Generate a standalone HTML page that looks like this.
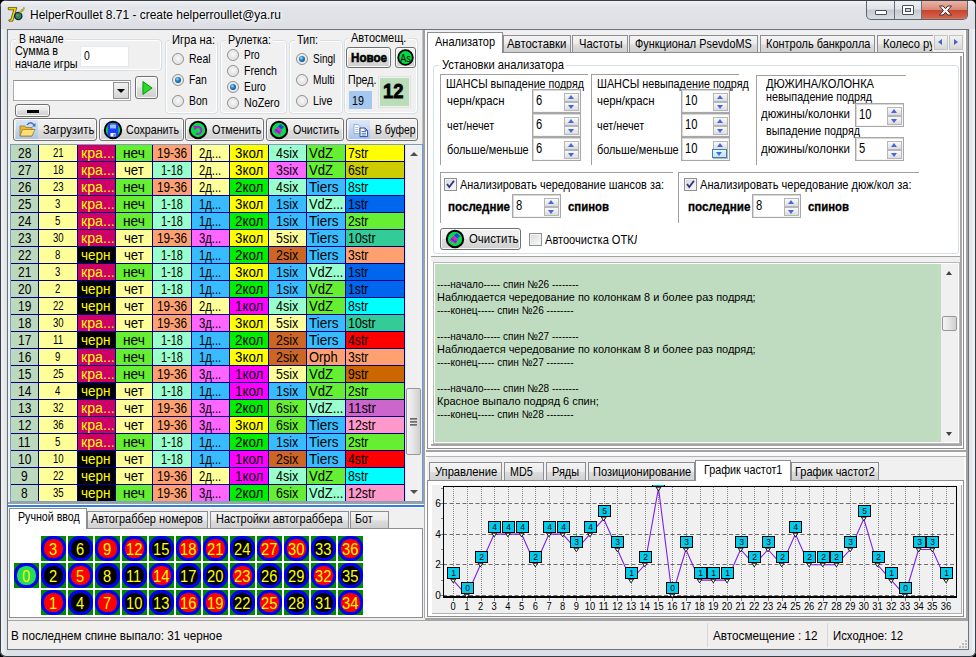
<!DOCTYPE html>
<html lang="ru"><head><meta charset="utf-8"><title>HelperRoullet 8.71</title>
<style>
html,body{margin:0;padding:0;background:#000;}
body{width:976px;height:657px;overflow:hidden;position:relative;font-family:"Liberation Sans",sans-serif;}
div,span.t,svg{position:absolute;box-sizing:border-box;}
.t{white-space:nowrap;transform-origin:0 0;color:#000;font-family:"Liberation Sans",sans-serif;}
#frame{left:0;top:0;width:976px;height:657px;border-radius:7px 7px 6px 6px;background:linear-gradient(90deg,#f4f6f9 0,#dde0e6 7px,#dde0e6 969px,#f4f6f9 976px);box-shadow:inset 0 0 0 1px #3a3f46;overflow:hidden;}
#tbar{left:1px;top:1px;width:974px;height:28px;background:linear-gradient(180deg,#f1f2f4 0,#e1e4e9 20%,#dddfe4 100%);}
#client{left:7px;top:29px;width:962px;height:621px;background:#f0f0f0;border:1px solid #6d737b;}
.btn{border:1px solid #707070;border-radius:3px;background:linear-gradient(180deg,#f2f2f2 0,#ebebeb 48%,#dddddd 52%,#cfcfcf 100%);box-shadow:inset 0 0 0 1px rgba(255,255,255,.85);}
.gb{border:1px solid #d5dfe5;border-radius:4px;box-shadow:inset 0 0 0 1px #fff;}
.gbw{border:1px solid #d5dfe5;border-radius:3px;}
.rad{width:12px;height:12px;border-radius:50%;border:1px solid #8e8f8f;background:radial-gradient(circle at 50% 45%,#fafafa 0,#e4e4e4 55%,#c9c9c9 100%);box-shadow:inset 0 0 0 1px #f0f0f0;}
.rad.on::after{content:"";position:absolute;left:2px;top:2px;width:6px;height:6px;border-radius:50%;background:radial-gradient(circle at 40% 35%,#a8dcf8 0,#1f7fc4 40%,#083a70 100%);}
.edit{background:#fff;border:1px solid #abadb3;border-top-color:#8f9196;}
.spin{background:#fff;border:1px solid #a7a7a7;box-shadow:inset 1px 1px 0 #d9d9d9,inset -1px -1px 0 #f4f4f4;}
.sb{left:31px;width:15px;height:9px;border:1px solid #b4b6ba;background:linear-gradient(180deg,#fafafa,#dcdcdc);}
.sb::after{content:"";position:absolute;left:3px;width:0;height:0;border-left:3.500px solid transparent;border-right:3.500px solid transparent;}
.sb.u{top:3px;}.sb.d{top:12px;}
.sb.u::after{border-bottom:4px solid #4668d8;top:1px;}
.sb.d::after{border-top:4px solid #4668d8;top:2px;}
.chk{width:13px;height:13px;border:1px solid #8e8f8f;background:linear-gradient(135deg,#d8d8d8,#fbfbfb);box-shadow:inset 0 0 0 1px #f2f2f2;}
.tab{border:1px solid #8c8e94;border-bottom:0;background:linear-gradient(180deg,#f4f4f4 0,#ebebeb 50%,#dcdcdc 55%,#d0d0d0 100%);}
.tab.a{background:#fff;z-index:2;}
.page{background:#fff;border:1px solid #8c8e94;}
.pl{border-top:1px solid #a0a0a0;border-left:1px solid #a0a0a0;}
.cell{overflow:hidden;}
.c{position:absolute;white-space:nowrap;font-size:14px;line-height:16px;height:16px;top:0;color:#000;transform-origin:0 0;transform:scaleX(.84);font-family:"Liberation Sans",sans-serif;}
</style></head><body>
<div id="frame">
<div id="tbar"></div>
<svg style="left:7px;top:6px" width="18" height="18" viewBox="0 0 18 18">
<path d="M1.200 1.600h8.600l-4 13.600H2l-.3-1.200 2.300-.8 2.700-9.400H1.400z" fill="#f0e000" stroke="#5a4a00" stroke-width=".800"/>
<circle cx="11.300" cy="10" r="3.600" fill="#2f8f3f" stroke="#141c5c" stroke-width="1.300"/>
<path d="M9.500 8.500l2 1.500" stroke="#8a8a8a" stroke-width="1.200"/>
<path d="M12.500 6.500l2-3 .8.800 1.500-3 .8.800-1.800 3.200-.8-.6-1.600 2.600z" fill="#f6ee00" stroke="#6b5a00" stroke-width=".500"/>
</svg>
<span class="t" style="left:29.5px;top:8.34px;font-size:12px;line-height:14px;transform:scaleX(0.997);color:#000;text-shadow:0 0 5px #fff,0 0 8px #fff,0 0 3px #fff;">HelperRoullet 8.71 - create helperroullet@ya.ru</span>
<div style="left:866px;top:1px;width:102px;height:19px;border:1px solid #5f656d;border-top:0;border-radius:0 0 5px 5px;overflow:hidden;background:linear-gradient(180deg,#eef1f4 0,#dfe3e8 45%,#c4cad2 50%,#d8dde3 100%);">
<div style="left:27px;top:0;width:1px;height:19px;background:#6a7078"></div>
<div style="left:54px;top:0;width:1px;height:19px;background:#6a7078"></div>
<div style="left:55px;top:0;width:46px;height:19px;background:linear-gradient(180deg,#e8b4a8 0,#d98a78 45%,#c8452c 50%,#d2604a 85%,#dd8a70 100%);"></div>
<div style="left:8px;top:9px;width:12px;height:5px;border:1px solid #4a5058;background:#fff;border-radius:1px"></div>
<div style="left:35px;top:4px;width:12px;height:10px;border:1px solid #4a5058;background:#fff;border-radius:1px"></div>
<div style="left:38px;top:7px;width:6px;height:4px;border:1px solid #4a5058;background:#cdd2d8"></div>
<svg style="left:72px;top:4px" width="13" height="11" viewBox="0 0 13 11"><path d="M.500 1h3.700l2.300 2.700L8.800 1h3.700L8.600 5.500l3.900 4.500H8.800L6.500 7.300 4.200 10H.500l3.900-4.500z" fill="#fff" stroke="#4a2a32" stroke-width="1"/></svg>
</div>
<div id="client"></div>
<div class="gb" style="left:10px;top:39px;width:152px;height:32px;"></div>
<div style="left:16px;top:33px;width:49px;height:12px;background:#f0f0f0"></div>
<span class="t" style="left:18.5px;top:30.80px;font-size:13px;line-height:15px;transform:scaleX(0.806);">В начале</span>
<span class="t" style="left:14.5px;top:42.80px;font-size:13px;line-height:15px;transform:scaleX(0.837);">Сумма в</span>
<span class="t" style="left:14.5px;top:55.80px;font-size:13px;line-height:15px;transform:scaleX(0.832);">начале игры</span>
<div class="" style="left:80px;top:46px;width:49px;height:21px;background:#fff;border:1px solid #e3e9ef;"></div>
<span class="t" style="left:83.5px;top:48.00px;font-size:13px;line-height:15px;transform:scaleX(0.802);">0</span>
<div class="edit" style="left:13px;top:80px;width:118px;height:21px;"></div>
<div class="" style="left:113px;top:82px;width:16px;height:17px;border:1px solid #8f8f8f;background:linear-gradient(180deg,#f2f2f2,#d4d4d4);"></div>
<div style="left:117px;top:89px;border:4px solid transparent;border-top:4px solid #000;border-bottom:0;width:0;height:0"></div>
<div class="btn" style="left:135px;top:76px;width:23px;height:23px;"></div>
<svg style="left:142px;top:80px" width="11" height="16" viewBox="0 0 12 16"><path d="M1 1l10 7L1 15z" fill="#22dd22" stroke="#0a8a0a" stroke-width="1"/></svg>
<div class="btn" style="left:15px;top:104px;width:35px;height:13px;"></div>
<div class="" style="left:27px;top:110px;width:12px;height:3px;background:#000"></div>
<div class="gb" style="left:165px;top:40px;width:53px;height:74px;"></div>
<div style="left:170px;top:34px;width:47px;height:12px;background:#f0f0f0"></div>
<span class="t" style="left:172px;top:32.00px;font-size:13px;line-height:15px;transform:scaleX(0.857);">Игра на:</span>
<div class="gb" style="left:220px;top:40px;width:67px;height:74px;"></div>
<div style="left:226px;top:34px;width:47px;height:12px;background:#f0f0f0"></div>
<span class="t" style="left:228px;top:32.00px;font-size:13px;line-height:15px;transform:scaleX(0.826);">Рулетка:</span>
<div class="gb" style="left:289px;top:40px;width:54px;height:74px;"></div>
<div style="left:295px;top:34px;width:25px;height:12px;background:#f0f0f0"></div>
<span class="t" style="left:297px;top:32.00px;font-size:13px;line-height:15px;transform:scaleX(0.831);">Тип:</span>
<div class="gb" style="left:344px;top:38px;width:74px;height:76px;"></div>
<div style="left:349px;top:32px;width:59.4px;height:12px;background:#f0f0f0"></div>
<span class="t" style="left:351px;top:30.00px;font-size:13px;line-height:15px;transform:scaleX(0.848);">Автосмещ.</span>
<div class="rad" style="left:171.7px;top:52.7px;width:12px;height:12px;"></div>
<span class="t" style="left:188.7px;top:50.70px;font-size:13px;line-height:15px;transform:scaleX(0.807);">Real</span>
<div class="rad on" style="left:171.7px;top:73.7px;width:12px;height:12px;"></div>
<span class="t" style="left:188.7px;top:71.70px;font-size:13px;line-height:15px;transform:scaleX(0.799);">Fan</span>
<div class="rad" style="left:171.7px;top:94.7px;width:12px;height:12px;"></div>
<span class="t" style="left:188.7px;top:92.70px;font-size:13px;line-height:15px;transform:scaleX(0.799);">Bon</span>
<div class="rad" style="left:226.6px;top:48.8px;width:12px;height:12px;"></div>
<span class="t" style="left:243.6px;top:46.80px;font-size:13px;line-height:15px;transform:scaleX(0.776);">Pro</span>
<div class="rad" style="left:226.6px;top:64.7px;width:12px;height:12px;"></div>
<span class="t" style="left:243.6px;top:62.70px;font-size:13px;line-height:15px;transform:scaleX(0.813);">French</span>
<div class="rad on" style="left:226.6px;top:80.8px;width:12px;height:12px;"></div>
<span class="t" style="left:243.6px;top:78.80px;font-size:13px;line-height:15px;transform:scaleX(0.797);">Euro</span>
<div class="rad" style="left:226.6px;top:96.7px;width:12px;height:12px;"></div>
<span class="t" style="left:243.6px;top:94.70px;font-size:13px;line-height:15px;transform:scaleX(0.821);">NoZero</span>
<div class="rad on" style="left:295.6px;top:53px;width:12px;height:12px;"></div>
<span class="t" style="left:312.6px;top:51.00px;font-size:13px;line-height:15px;transform:scaleX(0.771);">Singl</span>
<div class="rad" style="left:295.6px;top:74px;width:12px;height:12px;"></div>
<span class="t" style="left:312.6px;top:72.00px;font-size:13px;line-height:15px;transform:scaleX(0.783);">Multi</span>
<div class="rad" style="left:295.6px;top:95px;width:12px;height:12px;"></div>
<span class="t" style="left:312.6px;top:93.00px;font-size:13px;line-height:15px;transform:scaleX(0.817);">Live</span>
<div class="btn" style="left:346px;top:47px;width:45px;height:21px;"></div>
<span class="t" style="left:350.7px;top:50.00px;font-size:13px;line-height:15px;transform:scaleX(0.893);font-weight:bold;-webkit-text-stroke:.6px #000;">Новое</span>
<div class="btn" style="left:395px;top:47px;width:21px;height:21px;"></div>
<svg style="left:397px;top:49px" width="17" height="17" viewBox="0 0 17 17"><circle cx="8.5" cy="8.5" r="7.3" fill="#00dd44" stroke="#000" stroke-width="1.8"/><text x="8.5" y="12.6" font-family="Liberation Sans,sans-serif" font-size="11" text-anchor="middle" fill="#000" textLength="10.500" lengthAdjust="spacingAndGlyphs">As</text></svg>
<span class="t" style="left:348px;top:72.00px;font-size:13px;line-height:15px;transform:scaleX(0.82);">Пред.</span>
<div class="" style="left:349px;top:91px;width:23px;height:18px;background:#a4c8f0"></div>
<span class="t" style="left:352px;top:93.00px;font-size:13px;line-height:15px;transform:scaleX(0.82);">19</span>
<div class="" style="left:378px;top:76px;width:33px;height:32px;border:1px solid #e2e2e2;background:#f0f0f0"></div>
<div class="" style="left:380px;top:78px;width:29px;height:28px;background:#b9dcb9"></div>
<span class="t" style="left:382.7px;top:80.37px;font-size:20px;line-height:22px;transform:scaleX(0.921);font-weight:bold;-webkit-text-stroke:.8px #000;">12</span>
<div class="btn" style="left:13px;top:118px;width:84px;height:23px;"></div>
<div style="left:16px;top:120px;width:22px;height:19px;background:linear-gradient(180deg,#d9e6f7,#a9c6ec)"></div>
<svg style="left:18px;top:121px" width="19" height="17" viewBox="0 0 19 17"><path d="M2 5h5l1 1.5h6V15H2z" fill="#e9b93a" stroke="#a77a12" stroke-width=".8"/><path d="M4.5 8.5H17L14 15H2z" fill="#fbdf7c" stroke="#a77a12" stroke-width=".8"/><path d="M9 4c2-3 5-3 7 0" fill="none" stroke="#3a6fb5" stroke-width="1.3"/><path d="M17.5 2v3.5H14z" fill="#3a6fb5"/></svg>
<span class="t" style="left:43px;top:122.00px;font-size:13px;line-height:15px;transform:scaleX(0.863);">Загрузить</span>
<div class="btn" style="left:99px;top:118px;width:85px;height:23px;"></div>
<svg style="left:103px;top:120px" width="20" height="20" viewBox="0 0 20 20"><circle cx="10" cy="10" r="8.2" fill="#00e04a" stroke="#000" stroke-width="2"/><path d="M4.700 3.500h10.600v13H4.700z" fill="#1c3cff"/><path d="M7 4.500h6v4H7z" fill="#9dbcf0"/><path d="M7.500 13h5v3.500h-5z" fill="#fff"/><path d="M10.500 13.800h1.200v2.700h-1.200z" fill="#1c3cff"/></svg>
<span class="t" style="left:126px;top:122.00px;font-size:13px;line-height:15px;transform:scaleX(0.82);">Сохранить</span>
<div class="btn" style="left:185px;top:118px;width:79px;height:23px;"></div>
<svg style="left:188px;top:120px" width="20" height="20" viewBox="0 0 20 20"><circle cx="10" cy="10" r="8.2" fill="#00e04a" stroke="#000" stroke-width="2"/><path d="M7 8c3-2.5 7-.5 6.3 3-.5 2.500-3 3.500-5.300 2.500" fill="none" stroke="#b020c8" stroke-width="2"/><path d="M5 5.500l5 1-3.200 4z" fill="#b020c8"/></svg>
<span class="t" style="left:211.7px;top:122.00px;font-size:13px;line-height:15px;transform:scaleX(0.832);">Отменить</span>
<div class="btn" style="left:266px;top:118px;width:78px;height:23px;"></div>
<svg style="left:269px;top:120px" width="20" height="20" viewBox="0 0 20 20"><circle cx="10" cy="10" r="8.2" fill="#00e04a" stroke="#000" stroke-width="2"/><path d="M11.500 4l3.500 3-2.500 2.500-3.500-3z" fill="#2040e0"/><path d="M8.500 6.500l4.500 4-2 4.500-6.500-3.500z" fill="#e020c0"/><path d="M6 9.500l5 3.500" stroke="#2040e0" stroke-width="1.500"/></svg>
<span class="t" style="left:293px;top:122.00px;font-size:13px;line-height:15px;transform:scaleX(0.82);">Очистить</span>
<div class="btn" style="left:346px;top:118px;width:72px;height:23px;"></div>
<div style="left:349px;top:120px;width:21px;height:19px;background:linear-gradient(180deg,#dfe9f8,#a6c4ee)"></div>
<svg style="left:351px;top:122px" width="18" height="16" viewBox="0 0 18 16"><path d="M3 2.500h3.800l2 2v7H3z" fill="#fff" stroke="#8ea4cc" stroke-width=".9"/><path d="M4.300 5.500h3M4.300 7.500h3M4.300 9.500h3" stroke="#9db4dc" stroke-width=".9"/><path d="M9 6h5l2.600 2.600v6H9z" fill="#fff" stroke="#2f4f9f" stroke-width="1"/><path d="M14 6v2.600h2.600" fill="none" stroke="#2f4f9f" stroke-width=".8"/><path d="M10.500 9.500h4.500M10.500 11.300h4.500M10.500 13h4.500" stroke="#3f6fd0" stroke-width=".9"/></svg>
<span class="t" style="left:374.5px;top:122.00px;font-size:13px;line-height:15px;transform:scaleX(0.794);">В буфер</span>
<div class="" style="left:10px;top:144px;width:413px;height:358px;background:#fff;border:1px solid #7f9db9;"></div>
<div style="left:11px;top:145px;width:394px;height:356px;background:#000080;overflow:hidden">
<div class="cell" style="left:0px;top:0px;width:27px;height:16px;background:#bcd9bd"><span class="c" style="left:6.8px;transform:scaleX(0.855)">28</span></div>
<div class="cell" style="left:28px;top:0px;width:38px;height:16px;background:#ffff99"><span class="c" style="left:13.7px;font-size:12px;transform:scaleX(0.8)">21</span></div>
<div class="cell" style="left:67px;top:0px;width:37px;height:16px;background:#cc0066"><span class="c" style="left:2.5px;color:#ffff00;transform:scaleX(1.013)">кра...</span></div>
<div class="cell" style="left:105px;top:0px;width:36px;height:16px;background:#66ee33"><span class="c" style="left:7.1px;transform:scaleX(0.98)">неч</span></div>
<div class="cell" style="left:142px;top:0px;width:38px;height:16px;background:#ffa070"><span class="c" style="left:3.9px;transform:scaleX(0.841)">19-36</span></div>
<div class="cell" style="left:181px;top:0px;width:37px;height:16px;background:#ffff99"><span class="c" style="left:7.4px;transform:scaleX(0.804)">2д...</span></div>
<div class="cell" style="left:219px;top:0px;width:38px;height:16px;background:#ffff00"><span class="c" style="left:4.8px;transform:scaleX(0.953)">3кол</span></div>
<div class="cell" style="left:258px;top:0px;width:37px;height:16px;background:#99ffcc"><span class="c" style="left:7.4px;transform:scaleX(0.888)">4six</span></div>
<div class="cell" style="left:296px;top:0px;width:38px;height:16px;background:#66ee33"><span class="c" style="left:2.2px;transform:scaleX(0.935)">VdZ</span></div>
<div class="cell" style="left:335px;top:0px;width:58px;height:16px;background:#ffff00"><span class="c" style="left:2.2px;transform:scaleX(0.874)">7str</span></div>
<div class="cell" style="left:0px;top:17px;width:27px;height:16px;background:#bcd9bd"><span class="c" style="left:6.8px;transform:scaleX(0.855)">27</span></div>
<div class="cell" style="left:28px;top:17px;width:38px;height:16px;background:#ffff99"><span class="c" style="left:13.7px;font-size:12px;transform:scaleX(0.8)">18</span></div>
<div class="cell" style="left:67px;top:17px;width:37px;height:16px;background:#cc0066"><span class="c" style="left:2.5px;color:#ffff00;transform:scaleX(1.013)">кра...</span></div>
<div class="cell" style="left:105px;top:17px;width:36px;height:16px;background:#ffff99"><span class="c" style="left:8.1px;transform:scaleX(0.942)">чет</span></div>
<div class="cell" style="left:142px;top:17px;width:38px;height:16px;background:#99ffcc"><span class="c" style="left:8.1px;transform:scaleX(0.782)">1-18</span></div>
<div class="cell" style="left:181px;top:17px;width:37px;height:16px;background:#ffff99"><span class="c" style="left:7.4px;transform:scaleX(0.804)">2д...</span></div>
<div class="cell" style="left:219px;top:17px;width:38px;height:16px;background:#ffff00"><span class="c" style="left:4.8px;transform:scaleX(0.953)">3кол</span></div>
<div class="cell" style="left:258px;top:17px;width:37px;height:16px;background:#ff66ff"><span class="c" style="left:7.4px;transform:scaleX(0.888)">3six</span></div>
<div class="cell" style="left:296px;top:17px;width:38px;height:16px;background:#66ee33"><span class="c" style="left:2.2px;transform:scaleX(0.935)">VdZ</span></div>
<div class="cell" style="left:335px;top:17px;width:58px;height:16px;background:#cccc00"><span class="c" style="left:2.2px;transform:scaleX(0.874)">6str</span></div>
<div class="cell" style="left:0px;top:34px;width:27px;height:16px;background:#bcd9bd"><span class="c" style="left:6.8px;transform:scaleX(0.855)">26</span></div>
<div class="cell" style="left:28px;top:34px;width:38px;height:16px;background:#ffff99"><span class="c" style="left:13.7px;font-size:12px;transform:scaleX(0.8)">23</span></div>
<div class="cell" style="left:67px;top:34px;width:37px;height:16px;background:#cc0066"><span class="c" style="left:2.5px;color:#ffff00;transform:scaleX(1.013)">кра...</span></div>
<div class="cell" style="left:105px;top:34px;width:36px;height:16px;background:#66ee33"><span class="c" style="left:7.1px;transform:scaleX(0.98)">неч</span></div>
<div class="cell" style="left:142px;top:34px;width:38px;height:16px;background:#ffa070"><span class="c" style="left:3.9px;transform:scaleX(0.841)">19-36</span></div>
<div class="cell" style="left:181px;top:34px;width:37px;height:16px;background:#ffff99"><span class="c" style="left:7.4px;transform:scaleX(0.804)">2д...</span></div>
<div class="cell" style="left:219px;top:34px;width:38px;height:16px;background:#00ee00"><span class="c" style="left:4.8px;transform:scaleX(0.953)">2кол</span></div>
<div class="cell" style="left:258px;top:34px;width:37px;height:16px;background:#99ffcc"><span class="c" style="left:7.4px;transform:scaleX(0.888)">4six</span></div>
<div class="cell" style="left:296px;top:34px;width:38px;height:16px;background:#38bcff"><span class="c" style="left:2.2px;transform:scaleX(0.965)">Tiers</span></div>
<div class="cell" style="left:335px;top:34px;width:58px;height:16px;background:#00ffff"><span class="c" style="left:2.2px;transform:scaleX(0.874)">8str</span></div>
<div class="cell" style="left:0px;top:51px;width:27px;height:16px;background:#bcd9bd"><span class="c" style="left:6.8px;transform:scaleX(0.855)">25</span></div>
<div class="cell" style="left:28px;top:51px;width:38px;height:16px;background:#ffff99"><span class="c" style="left:16.3px;font-size:12px;transform:scaleX(0.8)">3</span></div>
<div class="cell" style="left:67px;top:51px;width:37px;height:16px;background:#cc0066"><span class="c" style="left:2.5px;color:#ffff00;transform:scaleX(1.013)">кра...</span></div>
<div class="cell" style="left:105px;top:51px;width:36px;height:16px;background:#66ee33"><span class="c" style="left:7.1px;transform:scaleX(0.98)">неч</span></div>
<div class="cell" style="left:142px;top:51px;width:38px;height:16px;background:#99ffcc"><span class="c" style="left:8.1px;transform:scaleX(0.782)">1-18</span></div>
<div class="cell" style="left:181px;top:51px;width:37px;height:16px;background:#38bcff"><span class="c" style="left:7.4px;transform:scaleX(0.804)">1д...</span></div>
<div class="cell" style="left:219px;top:51px;width:38px;height:16px;background:#ffff00"><span class="c" style="left:4.8px;transform:scaleX(0.953)">3кол</span></div>
<div class="cell" style="left:258px;top:51px;width:37px;height:16px;background:#38bcff"><span class="c" style="left:7.4px;transform:scaleX(0.888)">1six</span></div>
<div class="cell" style="left:296px;top:51px;width:38px;height:16px;background:#99ffcc"><span class="c" style="left:2.2px;transform:scaleX(0.921)">VdZ...</span></div>
<div class="cell" style="left:335px;top:51px;width:58px;height:16px;background:#0066ee"><span class="c" style="left:2.2px;transform:scaleX(0.874)">1str</span></div>
<div class="cell" style="left:0px;top:68px;width:27px;height:16px;background:#bcd9bd"><span class="c" style="left:6.8px;transform:scaleX(0.855)">24</span></div>
<div class="cell" style="left:28px;top:68px;width:38px;height:16px;background:#ffff99"><span class="c" style="left:16.3px;font-size:12px;transform:scaleX(0.8)">5</span></div>
<div class="cell" style="left:67px;top:68px;width:37px;height:16px;background:#cc0066"><span class="c" style="left:2.5px;color:#ffff00;transform:scaleX(1.013)">кра...</span></div>
<div class="cell" style="left:105px;top:68px;width:36px;height:16px;background:#66ee33"><span class="c" style="left:7.1px;transform:scaleX(0.98)">неч</span></div>
<div class="cell" style="left:142px;top:68px;width:38px;height:16px;background:#99ffcc"><span class="c" style="left:8.1px;transform:scaleX(0.782)">1-18</span></div>
<div class="cell" style="left:181px;top:68px;width:37px;height:16px;background:#38bcff"><span class="c" style="left:7.4px;transform:scaleX(0.804)">1д...</span></div>
<div class="cell" style="left:219px;top:68px;width:38px;height:16px;background:#00ee00"><span class="c" style="left:4.8px;transform:scaleX(0.953)">2кол</span></div>
<div class="cell" style="left:258px;top:68px;width:37px;height:16px;background:#38bcff"><span class="c" style="left:7.4px;transform:scaleX(0.888)">1six</span></div>
<div class="cell" style="left:296px;top:68px;width:38px;height:16px;background:#38bcff"><span class="c" style="left:2.2px;transform:scaleX(0.965)">Tiers</span></div>
<div class="cell" style="left:335px;top:68px;width:58px;height:16px;background:#66ee33"><span class="c" style="left:2.2px;transform:scaleX(0.874)">2str</span></div>
<div class="cell" style="left:0px;top:85px;width:27px;height:16px;background:#bcd9bd"><span class="c" style="left:6.8px;transform:scaleX(0.855)">23</span></div>
<div class="cell" style="left:28px;top:85px;width:38px;height:16px;background:#ffff99"><span class="c" style="left:13.7px;font-size:12px;transform:scaleX(0.8)">30</span></div>
<div class="cell" style="left:67px;top:85px;width:37px;height:16px;background:#cc0066"><span class="c" style="left:2.5px;color:#ffff00;transform:scaleX(1.013)">кра...</span></div>
<div class="cell" style="left:105px;top:85px;width:36px;height:16px;background:#ffff99"><span class="c" style="left:8.1px;transform:scaleX(0.942)">чет</span></div>
<div class="cell" style="left:142px;top:85px;width:38px;height:16px;background:#ffa070"><span class="c" style="left:3.9px;transform:scaleX(0.841)">19-36</span></div>
<div class="cell" style="left:181px;top:85px;width:37px;height:16px;background:#ff66ff"><span class="c" style="left:7.4px;transform:scaleX(0.804)">3д...</span></div>
<div class="cell" style="left:219px;top:85px;width:38px;height:16px;background:#ffff00"><span class="c" style="left:4.8px;transform:scaleX(0.953)">3кол</span></div>
<div class="cell" style="left:258px;top:85px;width:37px;height:16px;background:#ffff99"><span class="c" style="left:7.4px;transform:scaleX(0.888)">5six</span></div>
<div class="cell" style="left:296px;top:85px;width:38px;height:16px;background:#38bcff"><span class="c" style="left:2.2px;transform:scaleX(0.965)">Tiers</span></div>
<div class="cell" style="left:335px;top:85px;width:58px;height:16px;background:#33cc99"><span class="c" style="left:2.2px;transform:scaleX(0.89)">10str</span></div>
<div class="cell" style="left:0px;top:102px;width:27px;height:16px;background:#bcd9bd"><span class="c" style="left:6.8px;transform:scaleX(0.855)">22</span></div>
<div class="cell" style="left:28px;top:102px;width:38px;height:16px;background:#ffff99"><span class="c" style="left:16.3px;font-size:12px;transform:scaleX(0.8)">8</span></div>
<div class="cell" style="left:67px;top:102px;width:37px;height:16px;background:#000000"><span class="c" style="left:2.5px;color:#ffff00;transform:scaleX(0.964)">черн</span></div>
<div class="cell" style="left:105px;top:102px;width:36px;height:16px;background:#ffff99"><span class="c" style="left:8.1px;transform:scaleX(0.942)">чет</span></div>
<div class="cell" style="left:142px;top:102px;width:38px;height:16px;background:#99ffcc"><span class="c" style="left:8.1px;transform:scaleX(0.782)">1-18</span></div>
<div class="cell" style="left:181px;top:102px;width:37px;height:16px;background:#38bcff"><span class="c" style="left:7.4px;transform:scaleX(0.804)">1д...</span></div>
<div class="cell" style="left:219px;top:102px;width:38px;height:16px;background:#00ee00"><span class="c" style="left:4.8px;transform:scaleX(0.953)">2кол</span></div>
<div class="cell" style="left:258px;top:102px;width:37px;height:16px;background:#cc6622"><span class="c" style="left:7.4px;transform:scaleX(0.888)">2six</span></div>
<div class="cell" style="left:296px;top:102px;width:38px;height:16px;background:#38bcff"><span class="c" style="left:2.2px;transform:scaleX(0.965)">Tiers</span></div>
<div class="cell" style="left:335px;top:102px;width:58px;height:16px;background:#ffa070"><span class="c" style="left:2.2px;transform:scaleX(0.874)">3str</span></div>
<div class="cell" style="left:0px;top:119px;width:27px;height:16px;background:#bcd9bd"><span class="c" style="left:6.8px;transform:scaleX(0.855)">21</span></div>
<div class="cell" style="left:28px;top:119px;width:38px;height:16px;background:#ffff99"><span class="c" style="left:16.3px;font-size:12px;transform:scaleX(0.8)">3</span></div>
<div class="cell" style="left:67px;top:119px;width:37px;height:16px;background:#cc0066"><span class="c" style="left:2.5px;color:#ffff00;transform:scaleX(1.013)">кра...</span></div>
<div class="cell" style="left:105px;top:119px;width:36px;height:16px;background:#66ee33"><span class="c" style="left:7.1px;transform:scaleX(0.98)">неч</span></div>
<div class="cell" style="left:142px;top:119px;width:38px;height:16px;background:#99ffcc"><span class="c" style="left:8.1px;transform:scaleX(0.782)">1-18</span></div>
<div class="cell" style="left:181px;top:119px;width:37px;height:16px;background:#38bcff"><span class="c" style="left:7.4px;transform:scaleX(0.804)">1д...</span></div>
<div class="cell" style="left:219px;top:119px;width:38px;height:16px;background:#ffff00"><span class="c" style="left:4.8px;transform:scaleX(0.953)">3кол</span></div>
<div class="cell" style="left:258px;top:119px;width:37px;height:16px;background:#38bcff"><span class="c" style="left:7.4px;transform:scaleX(0.888)">1six</span></div>
<div class="cell" style="left:296px;top:119px;width:38px;height:16px;background:#99ffcc"><span class="c" style="left:2.2px;transform:scaleX(0.921)">VdZ...</span></div>
<div class="cell" style="left:335px;top:119px;width:58px;height:16px;background:#0066ee"><span class="c" style="left:2.2px;transform:scaleX(0.874)">1str</span></div>
<div class="cell" style="left:0px;top:136px;width:27px;height:16px;background:#bcd9bd"><span class="c" style="left:6.8px;transform:scaleX(0.855)">20</span></div>
<div class="cell" style="left:28px;top:136px;width:38px;height:16px;background:#ffff99"><span class="c" style="left:16.3px;font-size:12px;transform:scaleX(0.8)">2</span></div>
<div class="cell" style="left:67px;top:136px;width:37px;height:16px;background:#000000"><span class="c" style="left:2.5px;color:#ffff00;transform:scaleX(0.964)">черн</span></div>
<div class="cell" style="left:105px;top:136px;width:36px;height:16px;background:#ffff99"><span class="c" style="left:8.1px;transform:scaleX(0.942)">чет</span></div>
<div class="cell" style="left:142px;top:136px;width:38px;height:16px;background:#99ffcc"><span class="c" style="left:8.1px;transform:scaleX(0.782)">1-18</span></div>
<div class="cell" style="left:181px;top:136px;width:37px;height:16px;background:#38bcff"><span class="c" style="left:7.4px;transform:scaleX(0.804)">1д...</span></div>
<div class="cell" style="left:219px;top:136px;width:38px;height:16px;background:#00ee00"><span class="c" style="left:4.8px;transform:scaleX(0.953)">2кол</span></div>
<div class="cell" style="left:258px;top:136px;width:37px;height:16px;background:#38bcff"><span class="c" style="left:7.4px;transform:scaleX(0.888)">1six</span></div>
<div class="cell" style="left:296px;top:136px;width:38px;height:16px;background:#66ee33"><span class="c" style="left:2.2px;transform:scaleX(0.935)">VdZ</span></div>
<div class="cell" style="left:335px;top:136px;width:58px;height:16px;background:#0066ee"><span class="c" style="left:2.2px;transform:scaleX(0.874)">1str</span></div>
<div class="cell" style="left:0px;top:153px;width:27px;height:16px;background:#bcd9bd"><span class="c" style="left:6.8px;transform:scaleX(0.855)">19</span></div>
<div class="cell" style="left:28px;top:153px;width:38px;height:16px;background:#ffff99"><span class="c" style="left:13.7px;font-size:12px;transform:scaleX(0.8)">22</span></div>
<div class="cell" style="left:67px;top:153px;width:37px;height:16px;background:#000000"><span class="c" style="left:2.5px;color:#ffff00;transform:scaleX(0.964)">черн</span></div>
<div class="cell" style="left:105px;top:153px;width:36px;height:16px;background:#ffff99"><span class="c" style="left:8.1px;transform:scaleX(0.942)">чет</span></div>
<div class="cell" style="left:142px;top:153px;width:38px;height:16px;background:#ffa070"><span class="c" style="left:3.9px;transform:scaleX(0.841)">19-36</span></div>
<div class="cell" style="left:181px;top:153px;width:37px;height:16px;background:#ffff99"><span class="c" style="left:7.4px;transform:scaleX(0.804)">2д...</span></div>
<div class="cell" style="left:219px;top:153px;width:38px;height:16px;background:#ff00ff"><span class="c" style="left:4.8px;transform:scaleX(0.953)">1кол</span></div>
<div class="cell" style="left:258px;top:153px;width:37px;height:16px;background:#99ffcc"><span class="c" style="left:7.4px;transform:scaleX(0.888)">4six</span></div>
<div class="cell" style="left:296px;top:153px;width:38px;height:16px;background:#66ee33"><span class="c" style="left:2.2px;transform:scaleX(0.935)">VdZ</span></div>
<div class="cell" style="left:335px;top:153px;width:58px;height:16px;background:#00ffff"><span class="c" style="left:2.2px;transform:scaleX(0.874)">8str</span></div>
<div class="cell" style="left:0px;top:170px;width:27px;height:16px;background:#bcd9bd"><span class="c" style="left:6.8px;transform:scaleX(0.855)">18</span></div>
<div class="cell" style="left:28px;top:170px;width:38px;height:16px;background:#ffff99"><span class="c" style="left:13.7px;font-size:12px;transform:scaleX(0.8)">30</span></div>
<div class="cell" style="left:67px;top:170px;width:37px;height:16px;background:#cc0066"><span class="c" style="left:2.5px;color:#ffff00;transform:scaleX(1.013)">кра...</span></div>
<div class="cell" style="left:105px;top:170px;width:36px;height:16px;background:#ffff99"><span class="c" style="left:8.1px;transform:scaleX(0.942)">чет</span></div>
<div class="cell" style="left:142px;top:170px;width:38px;height:16px;background:#ffa070"><span class="c" style="left:3.9px;transform:scaleX(0.841)">19-36</span></div>
<div class="cell" style="left:181px;top:170px;width:37px;height:16px;background:#ff66ff"><span class="c" style="left:7.4px;transform:scaleX(0.804)">3д...</span></div>
<div class="cell" style="left:219px;top:170px;width:38px;height:16px;background:#ffff00"><span class="c" style="left:4.8px;transform:scaleX(0.953)">3кол</span></div>
<div class="cell" style="left:258px;top:170px;width:37px;height:16px;background:#ffff99"><span class="c" style="left:7.4px;transform:scaleX(0.888)">5six</span></div>
<div class="cell" style="left:296px;top:170px;width:38px;height:16px;background:#38bcff"><span class="c" style="left:2.2px;transform:scaleX(0.965)">Tiers</span></div>
<div class="cell" style="left:335px;top:170px;width:58px;height:16px;background:#33cc99"><span class="c" style="left:2.2px;transform:scaleX(0.89)">10str</span></div>
<div class="cell" style="left:0px;top:187px;width:27px;height:16px;background:#bcd9bd"><span class="c" style="left:6.8px;transform:scaleX(0.855)">17</span></div>
<div class="cell" style="left:28px;top:187px;width:38px;height:16px;background:#ffff99"><span class="c" style="left:14.0px;font-size:12px;transform:scaleX(0.8)">11</span></div>
<div class="cell" style="left:67px;top:187px;width:37px;height:16px;background:#000000"><span class="c" style="left:2.5px;color:#ffff00;transform:scaleX(0.964)">черн</span></div>
<div class="cell" style="left:105px;top:187px;width:36px;height:16px;background:#66ee33"><span class="c" style="left:7.1px;transform:scaleX(0.98)">неч</span></div>
<div class="cell" style="left:142px;top:187px;width:38px;height:16px;background:#99ffcc"><span class="c" style="left:8.1px;transform:scaleX(0.782)">1-18</span></div>
<div class="cell" style="left:181px;top:187px;width:37px;height:16px;background:#38bcff"><span class="c" style="left:7.4px;transform:scaleX(0.804)">1д...</span></div>
<div class="cell" style="left:219px;top:187px;width:38px;height:16px;background:#00ee00"><span class="c" style="left:4.8px;transform:scaleX(0.953)">2кол</span></div>
<div class="cell" style="left:258px;top:187px;width:37px;height:16px;background:#cc6622"><span class="c" style="left:7.4px;transform:scaleX(0.888)">2six</span></div>
<div class="cell" style="left:296px;top:187px;width:38px;height:16px;background:#38bcff"><span class="c" style="left:2.2px;transform:scaleX(0.965)">Tiers</span></div>
<div class="cell" style="left:335px;top:187px;width:58px;height:16px;background:#ff0000"><span class="c" style="left:2.2px;transform:scaleX(0.874)">4str</span></div>
<div class="cell" style="left:0px;top:204px;width:27px;height:16px;background:#bcd9bd"><span class="c" style="left:6.8px;transform:scaleX(0.855)">16</span></div>
<div class="cell" style="left:28px;top:204px;width:38px;height:16px;background:#ffff99"><span class="c" style="left:16.3px;font-size:12px;transform:scaleX(0.8)">9</span></div>
<div class="cell" style="left:67px;top:204px;width:37px;height:16px;background:#cc0066"><span class="c" style="left:2.5px;color:#ffff00;transform:scaleX(1.013)">кра...</span></div>
<div class="cell" style="left:105px;top:204px;width:36px;height:16px;background:#66ee33"><span class="c" style="left:7.1px;transform:scaleX(0.98)">неч</span></div>
<div class="cell" style="left:142px;top:204px;width:38px;height:16px;background:#99ffcc"><span class="c" style="left:8.1px;transform:scaleX(0.782)">1-18</span></div>
<div class="cell" style="left:181px;top:204px;width:37px;height:16px;background:#38bcff"><span class="c" style="left:7.4px;transform:scaleX(0.804)">1д...</span></div>
<div class="cell" style="left:219px;top:204px;width:38px;height:16px;background:#ffff00"><span class="c" style="left:4.8px;transform:scaleX(0.953)">3кол</span></div>
<div class="cell" style="left:258px;top:204px;width:37px;height:16px;background:#cc6622"><span class="c" style="left:7.4px;transform:scaleX(0.888)">2six</span></div>
<div class="cell" style="left:296px;top:204px;width:38px;height:16px;background:#ffa070"><span class="c" style="left:2.2px;transform:scaleX(0.923)">Orph</span></div>
<div class="cell" style="left:335px;top:204px;width:58px;height:16px;background:#ffa070"><span class="c" style="left:2.2px;transform:scaleX(0.874)">3str</span></div>
<div class="cell" style="left:0px;top:221px;width:27px;height:16px;background:#bcd9bd"><span class="c" style="left:6.8px;transform:scaleX(0.855)">15</span></div>
<div class="cell" style="left:28px;top:221px;width:38px;height:16px;background:#ffff99"><span class="c" style="left:13.7px;font-size:12px;transform:scaleX(0.8)">25</span></div>
<div class="cell" style="left:67px;top:221px;width:37px;height:16px;background:#cc0066"><span class="c" style="left:2.5px;color:#ffff00;transform:scaleX(1.013)">кра...</span></div>
<div class="cell" style="left:105px;top:221px;width:36px;height:16px;background:#66ee33"><span class="c" style="left:7.1px;transform:scaleX(0.98)">неч</span></div>
<div class="cell" style="left:142px;top:221px;width:38px;height:16px;background:#ffa070"><span class="c" style="left:3.9px;transform:scaleX(0.841)">19-36</span></div>
<div class="cell" style="left:181px;top:221px;width:37px;height:16px;background:#ff66ff"><span class="c" style="left:7.4px;transform:scaleX(0.804)">3д...</span></div>
<div class="cell" style="left:219px;top:221px;width:38px;height:16px;background:#ff00ff"><span class="c" style="left:4.8px;transform:scaleX(0.953)">1кол</span></div>
<div class="cell" style="left:258px;top:221px;width:37px;height:16px;background:#ffff99"><span class="c" style="left:7.4px;transform:scaleX(0.888)">5six</span></div>
<div class="cell" style="left:296px;top:221px;width:38px;height:16px;background:#66ee33"><span class="c" style="left:2.2px;transform:scaleX(0.935)">VdZ</span></div>
<div class="cell" style="left:335px;top:221px;width:58px;height:16px;background:#cc6600"><span class="c" style="left:2.2px;transform:scaleX(0.874)">9str</span></div>
<div class="cell" style="left:0px;top:238px;width:27px;height:16px;background:#bcd9bd"><span class="c" style="left:6.8px;transform:scaleX(0.855)">14</span></div>
<div class="cell" style="left:28px;top:238px;width:38px;height:16px;background:#ffff99"><span class="c" style="left:16.3px;font-size:12px;transform:scaleX(0.8)">4</span></div>
<div class="cell" style="left:67px;top:238px;width:37px;height:16px;background:#000000"><span class="c" style="left:2.5px;color:#ffff00;transform:scaleX(0.964)">черн</span></div>
<div class="cell" style="left:105px;top:238px;width:36px;height:16px;background:#ffff99"><span class="c" style="left:8.1px;transform:scaleX(0.942)">чет</span></div>
<div class="cell" style="left:142px;top:238px;width:38px;height:16px;background:#99ffcc"><span class="c" style="left:8.1px;transform:scaleX(0.782)">1-18</span></div>
<div class="cell" style="left:181px;top:238px;width:37px;height:16px;background:#38bcff"><span class="c" style="left:7.4px;transform:scaleX(0.804)">1д...</span></div>
<div class="cell" style="left:219px;top:238px;width:38px;height:16px;background:#ff00ff"><span class="c" style="left:4.8px;transform:scaleX(0.953)">1кол</span></div>
<div class="cell" style="left:258px;top:238px;width:37px;height:16px;background:#38bcff"><span class="c" style="left:7.4px;transform:scaleX(0.888)">1six</span></div>
<div class="cell" style="left:296px;top:238px;width:38px;height:16px;background:#66ee33"><span class="c" style="left:2.2px;transform:scaleX(0.935)">VdZ</span></div>
<div class="cell" style="left:335px;top:238px;width:58px;height:16px;background:#66ee33"><span class="c" style="left:2.2px;transform:scaleX(0.874)">2str</span></div>
<div class="cell" style="left:0px;top:255px;width:27px;height:16px;background:#bcd9bd"><span class="c" style="left:6.8px;transform:scaleX(0.855)">13</span></div>
<div class="cell" style="left:28px;top:255px;width:38px;height:16px;background:#ffff99"><span class="c" style="left:13.7px;font-size:12px;transform:scaleX(0.8)">32</span></div>
<div class="cell" style="left:67px;top:255px;width:37px;height:16px;background:#cc0066"><span class="c" style="left:2.5px;color:#ffff00;transform:scaleX(1.013)">кра...</span></div>
<div class="cell" style="left:105px;top:255px;width:36px;height:16px;background:#ffff99"><span class="c" style="left:8.1px;transform:scaleX(0.942)">чет</span></div>
<div class="cell" style="left:142px;top:255px;width:38px;height:16px;background:#ffa070"><span class="c" style="left:3.9px;transform:scaleX(0.841)">19-36</span></div>
<div class="cell" style="left:181px;top:255px;width:37px;height:16px;background:#ff66ff"><span class="c" style="left:7.4px;transform:scaleX(0.804)">3д...</span></div>
<div class="cell" style="left:219px;top:255px;width:38px;height:16px;background:#00ee00"><span class="c" style="left:4.8px;transform:scaleX(0.953)">2кол</span></div>
<div class="cell" style="left:258px;top:255px;width:37px;height:16px;background:#66ee33"><span class="c" style="left:7.4px;transform:scaleX(0.888)">6six</span></div>
<div class="cell" style="left:296px;top:255px;width:38px;height:16px;background:#99ffcc"><span class="c" style="left:2.2px;transform:scaleX(0.921)">VdZ...</span></div>
<div class="cell" style="left:335px;top:255px;width:58px;height:16px;background:#cc66cc"><span class="c" style="left:2.2px;transform:scaleX(0.921)">11str</span></div>
<div class="cell" style="left:0px;top:272px;width:27px;height:16px;background:#bcd9bd"><span class="c" style="left:6.8px;transform:scaleX(0.855)">12</span></div>
<div class="cell" style="left:28px;top:272px;width:38px;height:16px;background:#ffff99"><span class="c" style="left:13.7px;font-size:12px;transform:scaleX(0.8)">36</span></div>
<div class="cell" style="left:67px;top:272px;width:37px;height:16px;background:#cc0066"><span class="c" style="left:2.5px;color:#ffff00;transform:scaleX(1.013)">кра...</span></div>
<div class="cell" style="left:105px;top:272px;width:36px;height:16px;background:#ffff99"><span class="c" style="left:8.1px;transform:scaleX(0.942)">чет</span></div>
<div class="cell" style="left:142px;top:272px;width:38px;height:16px;background:#ffa070"><span class="c" style="left:3.9px;transform:scaleX(0.841)">19-36</span></div>
<div class="cell" style="left:181px;top:272px;width:37px;height:16px;background:#ff66ff"><span class="c" style="left:7.4px;transform:scaleX(0.804)">3д...</span></div>
<div class="cell" style="left:219px;top:272px;width:38px;height:16px;background:#ffff00"><span class="c" style="left:4.8px;transform:scaleX(0.953)">3кол</span></div>
<div class="cell" style="left:258px;top:272px;width:37px;height:16px;background:#66ee33"><span class="c" style="left:7.4px;transform:scaleX(0.888)">6six</span></div>
<div class="cell" style="left:296px;top:272px;width:38px;height:16px;background:#38bcff"><span class="c" style="left:2.2px;transform:scaleX(0.965)">Tiers</span></div>
<div class="cell" style="left:335px;top:272px;width:58px;height:16px;background:#ff99cc"><span class="c" style="left:2.2px;transform:scaleX(0.89)">12str</span></div>
<div class="cell" style="left:0px;top:289px;width:27px;height:16px;background:#bcd9bd"><span class="c" style="left:7.3px;transform:scaleX(0.855)">11</span></div>
<div class="cell" style="left:28px;top:289px;width:38px;height:16px;background:#ffff99"><span class="c" style="left:16.3px;font-size:12px;transform:scaleX(0.8)">5</span></div>
<div class="cell" style="left:67px;top:289px;width:37px;height:16px;background:#cc0066"><span class="c" style="left:2.5px;color:#ffff00;transform:scaleX(1.013)">кра...</span></div>
<div class="cell" style="left:105px;top:289px;width:36px;height:16px;background:#66ee33"><span class="c" style="left:7.1px;transform:scaleX(0.98)">неч</span></div>
<div class="cell" style="left:142px;top:289px;width:38px;height:16px;background:#99ffcc"><span class="c" style="left:8.1px;transform:scaleX(0.782)">1-18</span></div>
<div class="cell" style="left:181px;top:289px;width:37px;height:16px;background:#38bcff"><span class="c" style="left:7.4px;transform:scaleX(0.804)">1д...</span></div>
<div class="cell" style="left:219px;top:289px;width:38px;height:16px;background:#00ee00"><span class="c" style="left:4.8px;transform:scaleX(0.953)">2кол</span></div>
<div class="cell" style="left:258px;top:289px;width:37px;height:16px;background:#38bcff"><span class="c" style="left:7.4px;transform:scaleX(0.888)">1six</span></div>
<div class="cell" style="left:296px;top:289px;width:38px;height:16px;background:#38bcff"><span class="c" style="left:2.2px;transform:scaleX(0.965)">Tiers</span></div>
<div class="cell" style="left:335px;top:289px;width:58px;height:16px;background:#66ee33"><span class="c" style="left:2.2px;transform:scaleX(0.874)">2str</span></div>
<div class="cell" style="left:0px;top:306px;width:27px;height:16px;background:#bcd9bd"><span class="c" style="left:6.8px;transform:scaleX(0.855)">10</span></div>
<div class="cell" style="left:28px;top:306px;width:38px;height:16px;background:#ffff99"><span class="c" style="left:13.7px;font-size:12px;transform:scaleX(0.8)">10</span></div>
<div class="cell" style="left:67px;top:306px;width:37px;height:16px;background:#000000"><span class="c" style="left:2.5px;color:#ffff00;transform:scaleX(0.964)">черн</span></div>
<div class="cell" style="left:105px;top:306px;width:36px;height:16px;background:#ffff99"><span class="c" style="left:8.1px;transform:scaleX(0.942)">чет</span></div>
<div class="cell" style="left:142px;top:306px;width:38px;height:16px;background:#99ffcc"><span class="c" style="left:8.1px;transform:scaleX(0.782)">1-18</span></div>
<div class="cell" style="left:181px;top:306px;width:37px;height:16px;background:#38bcff"><span class="c" style="left:7.4px;transform:scaleX(0.804)">1д...</span></div>
<div class="cell" style="left:219px;top:306px;width:38px;height:16px;background:#ff00ff"><span class="c" style="left:4.8px;transform:scaleX(0.953)">1кол</span></div>
<div class="cell" style="left:258px;top:306px;width:37px;height:16px;background:#cc6622"><span class="c" style="left:7.4px;transform:scaleX(0.888)">2six</span></div>
<div class="cell" style="left:296px;top:306px;width:38px;height:16px;background:#38bcff"><span class="c" style="left:2.2px;transform:scaleX(0.965)">Tiers</span></div>
<div class="cell" style="left:335px;top:306px;width:58px;height:16px;background:#ff0000"><span class="c" style="left:2.2px;transform:scaleX(0.874)">4str</span></div>
<div class="cell" style="left:0px;top:323px;width:27px;height:16px;background:#bcd9bd"><span class="c" style="left:10.2px;transform:scaleX(0.855)">9</span></div>
<div class="cell" style="left:28px;top:323px;width:38px;height:16px;background:#ffff99"><span class="c" style="left:13.7px;font-size:12px;transform:scaleX(0.8)">22</span></div>
<div class="cell" style="left:67px;top:323px;width:37px;height:16px;background:#000000"><span class="c" style="left:2.5px;color:#ffff00;transform:scaleX(0.964)">черн</span></div>
<div class="cell" style="left:105px;top:323px;width:36px;height:16px;background:#ffff99"><span class="c" style="left:8.1px;transform:scaleX(0.942)">чет</span></div>
<div class="cell" style="left:142px;top:323px;width:38px;height:16px;background:#ffa070"><span class="c" style="left:3.9px;transform:scaleX(0.841)">19-36</span></div>
<div class="cell" style="left:181px;top:323px;width:37px;height:16px;background:#ffff99"><span class="c" style="left:7.4px;transform:scaleX(0.804)">2д...</span></div>
<div class="cell" style="left:219px;top:323px;width:38px;height:16px;background:#ff00ff"><span class="c" style="left:4.8px;transform:scaleX(0.953)">1кол</span></div>
<div class="cell" style="left:258px;top:323px;width:37px;height:16px;background:#99ffcc"><span class="c" style="left:7.4px;transform:scaleX(0.888)">4six</span></div>
<div class="cell" style="left:296px;top:323px;width:38px;height:16px;background:#66ee33"><span class="c" style="left:2.2px;transform:scaleX(0.935)">VdZ</span></div>
<div class="cell" style="left:335px;top:323px;width:58px;height:16px;background:#00ffff"><span class="c" style="left:2.2px;transform:scaleX(0.874)">8str</span></div>
<div class="cell" style="left:0px;top:340px;width:27px;height:16px;background:#bcd9bd"><span class="c" style="left:10.2px;transform:scaleX(0.855)">8</span></div>
<div class="cell" style="left:28px;top:340px;width:38px;height:16px;background:#ffff99"><span class="c" style="left:13.7px;font-size:12px;transform:scaleX(0.8)">35</span></div>
<div class="cell" style="left:67px;top:340px;width:37px;height:16px;background:#000000"><span class="c" style="left:2.5px;color:#ffff00;transform:scaleX(0.964)">черн</span></div>
<div class="cell" style="left:105px;top:340px;width:36px;height:16px;background:#66ee33"><span class="c" style="left:7.1px;transform:scaleX(0.98)">неч</span></div>
<div class="cell" style="left:142px;top:340px;width:38px;height:16px;background:#ffa070"><span class="c" style="left:3.9px;transform:scaleX(0.841)">19-36</span></div>
<div class="cell" style="left:181px;top:340px;width:37px;height:16px;background:#ff66ff"><span class="c" style="left:7.4px;transform:scaleX(0.804)">3д...</span></div>
<div class="cell" style="left:219px;top:340px;width:38px;height:16px;background:#00ee00"><span class="c" style="left:4.8px;transform:scaleX(0.953)">2кол</span></div>
<div class="cell" style="left:258px;top:340px;width:37px;height:16px;background:#66ee33"><span class="c" style="left:7.4px;transform:scaleX(0.888)">6six</span></div>
<div class="cell" style="left:296px;top:340px;width:38px;height:16px;background:#99ffcc"><span class="c" style="left:2.2px;transform:scaleX(0.921)">VdZ...</span></div>
<div class="cell" style="left:335px;top:340px;width:58px;height:16px;background:#ff99cc"><span class="c" style="left:2.2px;transform:scaleX(0.89)">12str</span></div>
</div>
<div class="" style="left:405px;top:145px;width:17px;height:356px;background:#f0f0f0;border-left:1px solid #e3e3e3"></div>
<div style="left:410px;top:152px;border:4px solid transparent;border-bottom:4px solid #505050;border-top:0;width:0;height:0"></div>
<div style="left:410px;top:490px;border:4px solid transparent;border-top:4px solid #505050;border-bottom:0;width:0;height:0"></div>
<div class="" style="left:406px;top:388px;width:15px;height:67px;border:1px solid #979797;border-radius:2px;background:linear-gradient(90deg,#f4f4f4 0,#e4e4e4 50%,#cfcfcf 100%);"></div>
<div class="" style="left:410px;top:418px;width:7px;height:2px;background:linear-gradient(180deg,#5a5a5a,#a0a0a0)"></div>
<div class="" style="left:410px;top:421px;width:7px;height:2px;background:linear-gradient(180deg,#5a5a5a,#a0a0a0)"></div>
<div class="" style="left:410px;top:424px;width:7px;height:2px;background:linear-gradient(180deg,#5a5a5a,#a0a0a0)"></div>
<div class="" style="left:10px;top:501px;width:413px;height:1px;background:#7da2ce"></div>
<div class="" style="left:8px;top:502px;width:415px;height:2px;background:#a0a0a0"></div>
<div class="" style="left:8px;top:504px;width:415px;height:1px;background:#fff"></div>
<div class="" style="left:8px;top:505px;width:416px;height:2px;background:#2f7fe0"></div>
<div class="" style="left:8px;top:507px;width:415px;height:1px;background:#fff"></div>
<div class="page" style="left:9px;top:528px;width:414px;height:90px;"></div>
<div class="tab a" style="left:9px;top:508px;width:78px;height:21px;"></div>
<span class="t" style="left:17.5px;top:509.30px;font-size:13px;line-height:15px;transform:scaleX(0.819);z-index:3;">Ручной ввод</span>
<div class="tab" style="left:87px;top:511px;width:121px;height:17px;"></div>
<span class="t" style="left:91px;top:511.30px;font-size:13px;line-height:15px;transform:scaleX(0.846);z-index:3;">Автограббер номеров</span>
<div class="tab" style="left:210px;top:511px;width:139px;height:17px;"></div>
<span class="t" style="left:216.3px;top:511.30px;font-size:13px;line-height:15px;transform:scaleX(0.844);z-index:3;">Настройки автограббера</span>
<div class="tab" style="left:350px;top:511px;width:39px;height:17px;"></div>
<span class="t" style="left:355.4px;top:511.30px;font-size:13px;line-height:15px;transform:scaleX(0.821);z-index:3;">Бот</span>
<div style="left:41px;top:536px;width:25px;height:25px;background:#008a00;overflow:hidden"><div style="left:0;top:0;width:25px;height:25px;border-radius:44%;background:#0000ee"></div><div style="left:3px;top:3px;width:19px;height:19px;border-radius:46%;background:#ff0000"></div><span class="t" style="top:4.500px;font-size:16px;line-height:17px;color:#ffff00;left:8.400px;transform:scaleX(.92)">3</span></div>
<div style="left:41px;top:563px;width:25px;height:25px;background:#008a00;overflow:hidden"><div style="left:0;top:0;width:25px;height:25px;border-radius:44%;background:#0000ee"></div><div style="left:3px;top:3px;width:19px;height:19px;border-radius:46%;background:#000000"></div><span class="t" style="top:4.500px;font-size:16px;line-height:17px;color:#ffff00;left:8.400px;transform:scaleX(.92)">2</span></div>
<div style="left:41px;top:590px;width:25px;height:25px;background:#008a00;overflow:hidden"><div style="left:0;top:0;width:25px;height:25px;border-radius:44%;background:#0000ee"></div><div style="left:3px;top:3px;width:19px;height:19px;border-radius:46%;background:#ff0000"></div><span class="t" style="top:4.500px;font-size:16px;line-height:17px;color:#ffff00;left:8.400px;transform:scaleX(.92)">1</span></div>
<div style="left:68px;top:536px;width:25px;height:25px;background:#008a00;overflow:hidden"><div style="left:0;top:0;width:25px;height:25px;border-radius:44%;background:#0000ee"></div><div style="left:3px;top:3px;width:19px;height:19px;border-radius:46%;background:#000000"></div><span class="t" style="top:4.500px;font-size:16px;line-height:17px;color:#ffff00;left:8.400px;transform:scaleX(.92)">6</span></div>
<div style="left:68px;top:563px;width:25px;height:25px;background:#008a00;overflow:hidden"><div style="left:0;top:0;width:25px;height:25px;border-radius:44%;background:#0000ee"></div><div style="left:3px;top:3px;width:19px;height:19px;border-radius:46%;background:#ff0000"></div><span class="t" style="top:4.500px;font-size:16px;line-height:17px;color:#ffff00;left:8.400px;transform:scaleX(.92)">5</span></div>
<div style="left:68px;top:590px;width:25px;height:25px;background:#008a00;overflow:hidden"><div style="left:0;top:0;width:25px;height:25px;border-radius:44%;background:#0000ee"></div><div style="left:3px;top:3px;width:19px;height:19px;border-radius:46%;background:#000000"></div><span class="t" style="top:4.500px;font-size:16px;line-height:17px;color:#ffff00;left:8.400px;transform:scaleX(.92)">4</span></div>
<div style="left:95px;top:536px;width:25px;height:25px;background:#008a00;overflow:hidden"><div style="left:0;top:0;width:25px;height:25px;border-radius:44%;background:#0000ee"></div><div style="left:3px;top:3px;width:19px;height:19px;border-radius:46%;background:#ff0000"></div><span class="t" style="top:4.500px;font-size:16px;line-height:17px;color:#ffff00;left:8.400px;transform:scaleX(.92)">9</span></div>
<div style="left:95px;top:563px;width:25px;height:25px;background:#008a00;overflow:hidden"><div style="left:0;top:0;width:25px;height:25px;border-radius:44%;background:#0000ee"></div><div style="left:3px;top:3px;width:19px;height:19px;border-radius:46%;background:#000000"></div><span class="t" style="top:4.500px;font-size:16px;line-height:17px;color:#ffff00;left:8.400px;transform:scaleX(.92)">8</span></div>
<div style="left:95px;top:590px;width:25px;height:25px;background:#008a00;overflow:hidden"><div style="left:0;top:0;width:25px;height:25px;border-radius:44%;background:#0000ee"></div><div style="left:3px;top:3px;width:19px;height:19px;border-radius:46%;background:#ff0000"></div><span class="t" style="top:4.500px;font-size:16px;line-height:17px;color:#ffff00;left:8.400px;transform:scaleX(.92)">7</span></div>
<div style="left:122px;top:536px;width:25px;height:25px;background:#008a00;overflow:hidden"><div style="left:0;top:0;width:25px;height:25px;border-radius:44%;background:#0000ee"></div><div style="left:3px;top:3px;width:19px;height:19px;border-radius:46%;background:#ff0000"></div><span class="t" style="top:4.500px;font-size:16px;line-height:17px;color:#ffff00;left:4.300px;transform:scaleX(.92)">12</span></div>
<div style="left:122px;top:563px;width:25px;height:25px;background:#008a00;overflow:hidden"><div style="left:0;top:0;width:25px;height:25px;border-radius:44%;background:#0000ee"></div><div style="left:3px;top:3px;width:19px;height:19px;border-radius:46%;background:#000000"></div><span class="t" style="top:4.500px;font-size:16px;line-height:17px;color:#ffff00;left:4.300px;transform:scaleX(.92)">11</span></div>
<div style="left:122px;top:590px;width:25px;height:25px;background:#008a00;overflow:hidden"><div style="left:0;top:0;width:25px;height:25px;border-radius:44%;background:#0000ee"></div><div style="left:3px;top:3px;width:19px;height:19px;border-radius:46%;background:#000000"></div><span class="t" style="top:4.500px;font-size:16px;line-height:17px;color:#ffff00;left:4.300px;transform:scaleX(.92)">10</span></div>
<div style="left:149px;top:536px;width:25px;height:25px;background:#008a00;overflow:hidden"><div style="left:0;top:0;width:25px;height:25px;border-radius:44%;background:#0000ee"></div><div style="left:3px;top:3px;width:19px;height:19px;border-radius:46%;background:#000000"></div><span class="t" style="top:4.500px;font-size:16px;line-height:17px;color:#ffff00;left:4.300px;transform:scaleX(.92)">15</span></div>
<div style="left:149px;top:563px;width:25px;height:25px;background:#008a00;overflow:hidden"><div style="left:0;top:0;width:25px;height:25px;border-radius:44%;background:#0000ee"></div><div style="left:3px;top:3px;width:19px;height:19px;border-radius:46%;background:#ff0000"></div><span class="t" style="top:4.500px;font-size:16px;line-height:17px;color:#ffff00;left:4.300px;transform:scaleX(.92)">14</span></div>
<div style="left:149px;top:590px;width:25px;height:25px;background:#008a00;overflow:hidden"><div style="left:0;top:0;width:25px;height:25px;border-radius:44%;background:#0000ee"></div><div style="left:3px;top:3px;width:19px;height:19px;border-radius:46%;background:#000000"></div><span class="t" style="top:4.500px;font-size:16px;line-height:17px;color:#ffff00;left:4.300px;transform:scaleX(.92)">13</span></div>
<div style="left:176px;top:536px;width:25px;height:25px;background:#008a00;overflow:hidden"><div style="left:0;top:0;width:25px;height:25px;border-radius:44%;background:#0000ee"></div><div style="left:3px;top:3px;width:19px;height:19px;border-radius:46%;background:#ff0000"></div><span class="t" style="top:4.500px;font-size:16px;line-height:17px;color:#ffff00;left:4.300px;transform:scaleX(.92)">18</span></div>
<div style="left:176px;top:563px;width:25px;height:25px;background:#008a00;overflow:hidden"><div style="left:0;top:0;width:25px;height:25px;border-radius:44%;background:#0000ee"></div><div style="left:3px;top:3px;width:19px;height:19px;border-radius:46%;background:#000000"></div><span class="t" style="top:4.500px;font-size:16px;line-height:17px;color:#ffff00;left:4.300px;transform:scaleX(.92)">17</span></div>
<div style="left:176px;top:590px;width:25px;height:25px;background:#008a00;overflow:hidden"><div style="left:0;top:0;width:25px;height:25px;border-radius:44%;background:#0000ee"></div><div style="left:3px;top:3px;width:19px;height:19px;border-radius:46%;background:#ff0000"></div><span class="t" style="top:4.500px;font-size:16px;line-height:17px;color:#ffff00;left:4.300px;transform:scaleX(.92)">16</span></div>
<div style="left:203px;top:536px;width:25px;height:25px;background:#008a00;overflow:hidden"><div style="left:0;top:0;width:25px;height:25px;border-radius:44%;background:#0000ee"></div><div style="left:3px;top:3px;width:19px;height:19px;border-radius:46%;background:#ff0000"></div><span class="t" style="top:4.500px;font-size:16px;line-height:17px;color:#ffff00;left:4.300px;transform:scaleX(.92)">21</span></div>
<div style="left:203px;top:563px;width:25px;height:25px;background:#008a00;overflow:hidden"><div style="left:0;top:0;width:25px;height:25px;border-radius:44%;background:#0000ee"></div><div style="left:3px;top:3px;width:19px;height:19px;border-radius:46%;background:#000000"></div><span class="t" style="top:4.500px;font-size:16px;line-height:17px;color:#ffff00;left:4.300px;transform:scaleX(.92)">20</span></div>
<div style="left:203px;top:590px;width:25px;height:25px;background:#008a00;overflow:hidden"><div style="left:0;top:0;width:25px;height:25px;border-radius:44%;background:#0000ee"></div><div style="left:3px;top:3px;width:19px;height:19px;border-radius:46%;background:#ff0000"></div><span class="t" style="top:4.500px;font-size:16px;line-height:17px;color:#ffff00;left:4.300px;transform:scaleX(.92)">19</span></div>
<div style="left:230px;top:536px;width:25px;height:25px;background:#008a00;overflow:hidden"><div style="left:0;top:0;width:25px;height:25px;border-radius:44%;background:#0000ee"></div><div style="left:3px;top:3px;width:19px;height:19px;border-radius:46%;background:#000000"></div><span class="t" style="top:4.500px;font-size:16px;line-height:17px;color:#ffff00;left:4.300px;transform:scaleX(.92)">24</span></div>
<div style="left:230px;top:563px;width:25px;height:25px;background:#008a00;overflow:hidden"><div style="left:0;top:0;width:25px;height:25px;border-radius:44%;background:#0000ee"></div><div style="left:3px;top:3px;width:19px;height:19px;border-radius:46%;background:#ff0000"></div><span class="t" style="top:4.500px;font-size:16px;line-height:17px;color:#ffff00;left:4.300px;transform:scaleX(.92)">23</span></div>
<div style="left:230px;top:590px;width:25px;height:25px;background:#008a00;overflow:hidden"><div style="left:0;top:0;width:25px;height:25px;border-radius:44%;background:#0000ee"></div><div style="left:3px;top:3px;width:19px;height:19px;border-radius:46%;background:#000000"></div><span class="t" style="top:4.500px;font-size:16px;line-height:17px;color:#ffff00;left:4.300px;transform:scaleX(.92)">22</span></div>
<div style="left:257px;top:536px;width:25px;height:25px;background:#008a00;overflow:hidden"><div style="left:0;top:0;width:25px;height:25px;border-radius:44%;background:#0000ee"></div><div style="left:3px;top:3px;width:19px;height:19px;border-radius:46%;background:#ff0000"></div><span class="t" style="top:4.500px;font-size:16px;line-height:17px;color:#ffff00;left:4.300px;transform:scaleX(.92)">27</span></div>
<div style="left:257px;top:563px;width:25px;height:25px;background:#008a00;overflow:hidden"><div style="left:0;top:0;width:25px;height:25px;border-radius:44%;background:#0000ee"></div><div style="left:3px;top:3px;width:19px;height:19px;border-radius:46%;background:#000000"></div><span class="t" style="top:4.500px;font-size:16px;line-height:17px;color:#ffff00;left:4.300px;transform:scaleX(.92)">26</span></div>
<div style="left:257px;top:590px;width:25px;height:25px;background:#008a00;overflow:hidden"><div style="left:0;top:0;width:25px;height:25px;border-radius:44%;background:#0000ee"></div><div style="left:3px;top:3px;width:19px;height:19px;border-radius:46%;background:#ff0000"></div><span class="t" style="top:4.500px;font-size:16px;line-height:17px;color:#ffff00;left:4.300px;transform:scaleX(.92)">25</span></div>
<div style="left:284px;top:536px;width:25px;height:25px;background:#008a00;overflow:hidden"><div style="left:0;top:0;width:25px;height:25px;border-radius:44%;background:#0000ee"></div><div style="left:3px;top:3px;width:19px;height:19px;border-radius:46%;background:#ff0000"></div><span class="t" style="top:4.500px;font-size:16px;line-height:17px;color:#ffff00;left:4.300px;transform:scaleX(.92)">30</span></div>
<div style="left:284px;top:563px;width:25px;height:25px;background:#008a00;overflow:hidden"><div style="left:0;top:0;width:25px;height:25px;border-radius:44%;background:#0000ee"></div><div style="left:3px;top:3px;width:19px;height:19px;border-radius:46%;background:#000000"></div><span class="t" style="top:4.500px;font-size:16px;line-height:17px;color:#ffff00;left:4.300px;transform:scaleX(.92)">29</span></div>
<div style="left:284px;top:590px;width:25px;height:25px;background:#008a00;overflow:hidden"><div style="left:0;top:0;width:25px;height:25px;border-radius:44%;background:#0000ee"></div><div style="left:3px;top:3px;width:19px;height:19px;border-radius:46%;background:#000000"></div><span class="t" style="top:4.500px;font-size:16px;line-height:17px;color:#ffff00;left:4.300px;transform:scaleX(.92)">28</span></div>
<div style="left:311px;top:536px;width:25px;height:25px;background:#008a00;overflow:hidden"><div style="left:0;top:0;width:25px;height:25px;border-radius:44%;background:#0000ee"></div><div style="left:3px;top:3px;width:19px;height:19px;border-radius:46%;background:#000000"></div><span class="t" style="top:4.500px;font-size:16px;line-height:17px;color:#ffff00;left:4.300px;transform:scaleX(.92)">33</span></div>
<div style="left:311px;top:563px;width:25px;height:25px;background:#008a00;overflow:hidden"><div style="left:0;top:0;width:25px;height:25px;border-radius:44%;background:#0000ee"></div><div style="left:3px;top:3px;width:19px;height:19px;border-radius:46%;background:#ff0000"></div><span class="t" style="top:4.500px;font-size:16px;line-height:17px;color:#ffff00;left:4.300px;transform:scaleX(.92)">32</span></div>
<div style="left:311px;top:590px;width:25px;height:25px;background:#008a00;overflow:hidden"><div style="left:0;top:0;width:25px;height:25px;border-radius:44%;background:#0000ee"></div><div style="left:3px;top:3px;width:19px;height:19px;border-radius:46%;background:#000000"></div><span class="t" style="top:4.500px;font-size:16px;line-height:17px;color:#ffff00;left:4.300px;transform:scaleX(.92)">31</span></div>
<div style="left:338px;top:536px;width:25px;height:25px;background:#008a00;overflow:hidden"><div style="left:0;top:0;width:25px;height:25px;border-radius:44%;background:#0000ee"></div><div style="left:3px;top:3px;width:19px;height:19px;border-radius:46%;background:#ff0000"></div><span class="t" style="top:4.500px;font-size:16px;line-height:17px;color:#ffff00;left:4.300px;transform:scaleX(.92)">36</span></div>
<div style="left:338px;top:563px;width:25px;height:25px;background:#008a00;overflow:hidden"><div style="left:0;top:0;width:25px;height:25px;border-radius:44%;background:#0000ee"></div><div style="left:3px;top:3px;width:19px;height:19px;border-radius:46%;background:#000000"></div><span class="t" style="top:4.500px;font-size:16px;line-height:17px;color:#ffff00;left:4.300px;transform:scaleX(.92)">35</span></div>
<div style="left:338px;top:590px;width:25px;height:25px;background:#008a00;overflow:hidden"><div style="left:0;top:0;width:25px;height:25px;border-radius:44%;background:#0000ee"></div><div style="left:3px;top:3px;width:19px;height:19px;border-radius:46%;background:#ff0000"></div><span class="t" style="top:4.500px;font-size:16px;line-height:17px;color:#ffff00;left:4.300px;transform:scaleX(.92)">34</span></div>
<div style="left:14px;top:563px;width:25px;height:25px;background:#008a00;overflow:hidden"><div style="left:0;top:0;width:25px;height:25px;border-radius:44%;background:#0000ee"></div><div style="left:3px;top:3px;width:19px;height:19px;border-radius:46%;background:#22dd55"></div><span class="t" style="top:4.500px;font-size:16px;line-height:17px;color:#ffff00;left:8.400px;transform:scaleX(.92)">0</span></div>
<div class="" style="left:8px;top:620px;width:960px;height:1px;background:#a5a5a5"></div>
<div class="" style="left:8px;top:621px;width:960px;height:28px;background:#f1eeee"></div>
<span class="t" style="left:11px;top:628.84px;font-size:12px;line-height:14px;transform:scaleX(0.975);">В последнем спине выпало: 31 черное</span>
<div class="" style="left:707px;top:623px;width:1px;height:24px;background:#d7d7d7"></div>
<div class="" style="left:827px;top:623px;width:1px;height:24px;background:#d7d7d7"></div>
<span class="t" style="left:712.5px;top:628.84px;font-size:12px;line-height:14px;transform:scaleX(0.978);">Автосмещение : 12</span>
<span class="t" style="left:832.5px;top:628.84px;font-size:12px;line-height:14px;transform:scaleX(0.948);">Исходное: 12</span>
<div class="" style="left:959px;top:646px;width:2px;height:2px;background:#bdbdbd"></div>
<div class="" style="left:962px;top:646px;width:2px;height:2px;background:#bdbdbd"></div>
<div class="" style="left:965px;top:646px;width:2px;height:2px;background:#bdbdbd"></div>
<div class="" style="left:962px;top:643px;width:2px;height:2px;background:#bdbdbd"></div>
<div class="" style="left:965px;top:643px;width:2px;height:2px;background:#bdbdbd"></div>
<div class="" style="left:965px;top:640px;width:2px;height:2px;background:#bdbdbd"></div>
<div class="" style="left:423px;top:30px;width:2px;height:474px;background:#a0a0a0"></div>
<div class="" style="left:422px;top:30px;width:1px;height:114px;background:#c4c4c4"></div>
<div class="" style="left:424px;top:504px;width:1px;height:114px;background:#ababab"></div>
<div class="" style="left:422px;top:144px;width:1px;height:358px;background:#6a9ad8"></div>
<div class="" style="left:425px;top:30px;width:2px;height:590px;background:#fbfbfb"></div>
<div class="page" style="left:427px;top:52px;width:537px;height:397px;"></div>
<div class="tab a" style="left:427px;top:32px;width:76px;height:21px;"></div>
<span class="t" style="left:435px;top:33.50px;font-size:13px;line-height:15px;transform:scaleX(0.844);z-index:3;">Анализатор</span>
<div class="tab" style="left:503px;top:35px;width:68px;height:17px;"></div>
<span class="t" style="left:507.3px;top:35.70px;font-size:13px;line-height:15px;transform:scaleX(0.878);z-index:3;">Автоставки</span>
<div class="tab" style="left:572px;top:35px;width:56px;height:17px;"></div>
<span class="t" style="left:578.8px;top:35.70px;font-size:13px;line-height:15px;transform:scaleX(0.862);z-index:3;">Частоты</span>
<div class="tab" style="left:629px;top:35px;width:129px;height:17px;"></div>
<span class="t" style="left:635.2px;top:35.70px;font-size:13px;line-height:15px;transform:scaleX(0.836);z-index:3;">Функционал PsevdoMS</span>
<div class="tab" style="left:760px;top:35px;width:115px;height:17px;"></div>
<span class="t" style="left:765.7px;top:35.70px;font-size:13px;line-height:15px;transform:scaleX(0.843);z-index:3;">Контроль банкролла</span>
<div style="left:877px;top:35px;width:56px;height:17px;overflow:hidden"><div class="tab" style="left:0;top:0;width:70px;height:17px"></div></div>
<div style="left:883px;top:36px;width:49px;height:16px;overflow:hidden">
<span class="t" style="left:0px;top:-0.30px;font-size:13px;line-height:15px;transform:scaleX(0.856);">Колесо рул</span>
</div>
<div class="" style="left:934px;top:35px;width:14px;height:15px;border:1px solid #c3c3c3;background:linear-gradient(180deg,#f2f2f2,#d8d8d8);"></div>
<div style="left:938px;top:39px;border:3px solid transparent;border-right:4px solid #4a64c8;border-left:0;width:0;height:0"></div>
<div class="" style="left:949px;top:35px;width:14px;height:15px;border:1px solid #c3c3c3;background:linear-gradient(180deg,#f2f2f2,#d8d8d8);"></div>
<div style="left:954px;top:39px;border:3px solid transparent;border-left:4px solid #4a64c8;border-right:0;width:0;height:0"></div>
<div class="" style="left:960px;top:56px;width:2px;height:390px;background:#a5a5a5"></div>
<div class="gbw" style="left:433px;top:65px;width:526px;height:189px;"></div>
<div style="left:439px;top:59px;width:127px;height:12px;background:#fff"></div>
<span class="t" style="left:441.5px;top:56.50px;font-size:13px;line-height:15px;transform:scaleX(0.861);">Установки анализатора</span>
<div class="pl" style="left:440px;top:74px;width:148px;height:91px;"></div>
<span class="t" style="left:446px;top:76.00px;font-size:13px;line-height:15px;transform:scaleX(0.819);">ШАНСЫ выпадение подряд</span>
<span class="t" style="left:447px;top:93.00px;font-size:13px;line-height:15px;transform:scaleX(0.873);">черн/красн</span>
<div class="spin" style="left:532px;top:89px;width:49px;height:24px"><div class="sb u"></div><div class="sb d"></div></div>
<span class="t" style="left:536px;top:91.95px;font-size:14px;line-height:16px;transform:scaleX(0.8);">6</span>
<span class="t" style="left:447px;top:118.00px;font-size:13px;line-height:15px;transform:scaleX(0.834);">чет/нечет</span>
<div class="spin" style="left:532px;top:113px;width:49px;height:24px"><div class="sb u"></div><div class="sb d"></div></div>
<span class="t" style="left:536px;top:115.95px;font-size:14px;line-height:16px;transform:scaleX(0.8);">6</span>
<span class="t" style="left:447px;top:142.00px;font-size:13px;line-height:15px;transform:scaleX(0.835);">больше/меньше</span>
<div class="spin" style="left:532px;top:137px;width:49px;height:24px"><div class="sb u"></div><div class="sb d"></div></div>
<span class="t" style="left:536px;top:139.95px;font-size:14px;line-height:16px;transform:scaleX(0.8);">6</span>
<div class="pl" style="left:591px;top:74px;width:148px;height:91px;"></div>
<span class="t" style="left:597px;top:76.00px;font-size:13px;line-height:15px;transform:scaleX(0.831);">ШАНСЫ невыпадение подряд</span>
<span class="t" style="left:597px;top:93.00px;font-size:13px;line-height:15px;transform:scaleX(0.873);">черн/красн</span>
<div class="spin" style="left:681px;top:89px;width:49px;height:24px"><div class="sb u"></div><div class="sb d"></div></div>
<span class="t" style="left:685px;top:91.95px;font-size:14px;line-height:16px;transform:scaleX(0.8);">10</span>
<span class="t" style="left:597px;top:118.00px;font-size:13px;line-height:15px;transform:scaleX(0.834);">чет/нечет</span>
<div class="spin" style="left:681px;top:113px;width:49px;height:24px"><div class="sb u"></div><div class="sb d"></div></div>
<span class="t" style="left:685px;top:115.95px;font-size:14px;line-height:16px;transform:scaleX(0.8);">10</span>
<span class="t" style="left:597px;top:142.00px;font-size:13px;line-height:15px;transform:scaleX(0.835);">больше/меньше</span>
<div class="spin" style="left:681px;top:137px;width:49px;height:24px"><div class="sb u"></div><div class="sb d"></div></div>
<span class="t" style="left:685px;top:139.95px;font-size:14px;line-height:16px;transform:scaleX(0.8);">10</span>
<div class="" style="left:712px;top:149px;width:15px;height:9px;border:1px solid #3c7fb1;background:linear-gradient(180deg,#eaf6fd,#bee6fd);"></div>
<div style="left:716px;top:152px;border-left:3.500px solid transparent;border-right:3.500px solid transparent;border-top:4px solid #4668d8;width:0;height:0"></div>
<div class="pl" style="left:756px;top:75px;width:150px;height:90px;"></div>
<span class="t" style="left:766px;top:76.00px;font-size:13px;line-height:15px;transform:scaleX(0.855);">ДЮЖИНА/КОЛОНКА</span>
<span class="t" style="left:766px;top:88.50px;font-size:13px;line-height:15px;transform:scaleX(0.826);">невыпадение подряд</span>
<span class="t" style="left:761px;top:105.50px;font-size:13px;line-height:15px;transform:scaleX(0.88);">дюжины/колонки</span>
<div class="spin" style="left:855px;top:103px;width:49px;height:24px"><div class="sb u"></div><div class="sb d"></div></div>
<span class="t" style="left:859px;top:105.95px;font-size:14px;line-height:16px;transform:scaleX(0.8);">10</span>
<span class="t" style="left:766px;top:123.00px;font-size:13px;line-height:15px;transform:scaleX(0.825);">выпадение подряд</span>
<span class="t" style="left:761px;top:140.50px;font-size:13px;line-height:15px;transform:scaleX(0.88);">дюжины/колонки</span>
<div class="spin" style="left:855px;top:137px;width:49px;height:24px"><div class="sb u"></div><div class="sb d"></div></div>
<span class="t" style="left:859px;top:139.95px;font-size:14px;line-height:16px;transform:scaleX(0.8);">5</span>
<div class="pl" style="left:440px;top:172px;width:233px;height:51px;"></div>
<div class="chk" style="left:444px;top:178px;width:13px;height:13px;"></div>
<svg style="left:446px;top:180px" width="9" height="9" viewBox="0 0 9 9"><path d="M1 4l2.300 3L8 .8" fill="none" stroke="#31347b" stroke-width="1.800"/></svg>
<span class="t" style="left:460px;top:177.00px;font-size:13px;line-height:15px;transform:scaleX(0.836);">Анализировать чередование шансов за:</span>
<span class="t" style="left:448px;top:199.00px;font-size:13px;line-height:15px;transform:scaleX(0.892);font-weight:bold;-webkit-text-stroke:.3px #000;">последние</span>
<div class="spin" style="left:512px;top:194px;width:49px;height:24px"><div class="sb u"></div><div class="sb d"></div></div>
<span class="t" style="left:516px;top:196.95px;font-size:14px;line-height:16px;transform:scaleX(0.8);">8</span>
<span class="t" style="left:568px;top:199.00px;font-size:13px;line-height:15px;transform:scaleX(0.875);font-weight:bold;-webkit-text-stroke:.3px #000;">спинов</span>
<div class="pl" style="left:678px;top:172px;width:241px;height:51px;"></div>
<div class="chk" style="left:684px;top:178px;width:13px;height:13px;"></div>
<svg style="left:686px;top:180px" width="9" height="9" viewBox="0 0 9 9"><path d="M1 4l2.300 3L8 .8" fill="none" stroke="#31347b" stroke-width="1.800"/></svg>
<span class="t" style="left:699.8px;top:177.00px;font-size:13px;line-height:15px;transform:scaleX(0.852);">Анализировать чередование дюж/кол за:</span>
<span class="t" style="left:687.6px;top:199.00px;font-size:13px;line-height:15px;transform:scaleX(0.898);font-weight:bold;-webkit-text-stroke:.3px #000;">последние</span>
<div class="spin" style="left:752px;top:194px;width:49px;height:24px"><div class="sb u"></div><div class="sb d"></div></div>
<span class="t" style="left:756px;top:196.95px;font-size:14px;line-height:16px;transform:scaleX(0.8);">8</span>
<span class="t" style="left:808px;top:199.00px;font-size:13px;line-height:15px;transform:scaleX(0.875);font-weight:bold;-webkit-text-stroke:.3px #000;">спинов</span>
<div class="btn" style="left:440px;top:228px;width:81px;height:22px;"></div>
<svg style="left:445px;top:229px" width="20" height="20" viewBox="0 0 20 20"><circle cx="10" cy="10" r="8.2" fill="#00e04a" stroke="#000" stroke-width="2"/><path d="M11.500 4l3.500 3-2.500 2.500-3.500-3z" fill="#2040e0"/><path d="M8.500 6.500l4.500 4-2 4.500-6.500-3.500z" fill="#e020c0"/><path d="M6 9.500l5 3.500" stroke="#2040e0" stroke-width="1.500"/></svg>
<span class="t" style="left:468.5px;top:231.00px;font-size:13px;line-height:15px;transform:scaleX(0.875);">Очистить</span>
<div class="chk" style="left:529px;top:233px;width:13px;height:13px;"></div>
<div style="left:545px;top:230px;width:92px;height:18px;overflow:hidden">
<span class="t" style="left:0px;top:1.50px;font-size:13px;line-height:15px;transform:scaleX(0.851);">Автоочистка ОТКЛ</span>
</div>
<div class="" style="left:431px;top:256px;width:529px;height:1px;background:#a0a0a0"></div>
<div class="" style="left:431px;top:257px;width:529px;height:5px;background:#f0f0f0"></div>
<div class="" style="left:433px;top:262px;width:527px;height:182px;background:#fff;border:1px solid #b9b9b9"></div>
<div class="" style="left:435px;top:264px;width:506px;height:178px;background:#c0dcc0"></div>
<span class="t" style="left:436.5px;top:278.09px;font-size:11px;line-height:13px;transform:scaleX(0.91);">----начало----- спин №26 --------</span>
<span class="t" style="left:436.5px;top:291.09px;font-size:11px;line-height:13px;transform:scaleX(0.995);">Наблюдается чередование по колонкам 8 и более раз подряд;</span>
<span class="t" style="left:436.5px;top:304.09px;font-size:11px;line-height:13px;transform:scaleX(0.918);">----конец----- спин №26 --------</span>
<span class="t" style="left:436.5px;top:330.09px;font-size:11px;line-height:13px;transform:scaleX(0.91);">----начало----- спин №27 --------</span>
<span class="t" style="left:436.5px;top:343.09px;font-size:11px;line-height:13px;transform:scaleX(0.995);">Наблюдается чередование по колонкам 8 и более раз подряд;</span>
<span class="t" style="left:436.5px;top:356.09px;font-size:11px;line-height:13px;transform:scaleX(0.918);">----конец----- спин №27 --------</span>
<span class="t" style="left:436.5px;top:382.09px;font-size:11px;line-height:13px;transform:scaleX(0.91);">----начало----- спин №28 --------</span>
<span class="t" style="left:436.5px;top:395.09px;font-size:11px;line-height:13px;transform:scaleX(0.995);">Красное выпало подряд 6 спин;</span>
<span class="t" style="left:436.5px;top:408.09px;font-size:11px;line-height:13px;transform:scaleX(0.918);">----конец----- спин №28 --------</span>
<div class="" style="left:941px;top:264px;width:17px;height:178px;background:#f0f0f0"></div>
<div style="left:946px;top:271px;border:3.500px solid transparent;border-bottom:4px solid #404040;border-top:0;width:0;height:0"></div>
<div style="left:946px;top:432px;border:3.500px solid transparent;border-top:4px solid #404040;border-bottom:0;width:0;height:0"></div>
<div class="" style="left:942px;top:316px;width:15px;height:15px;border:1px solid #979797;border-radius:2px;background:linear-gradient(90deg,#f4f4f4 0,#e4e4e4 50%,#cfcfcf 100%);"></div>
<div class="" style="left:431px;top:444px;width:530px;height:2px;background:#a5a5a5"></div>
<div class="" style="left:425px;top:449px;width:541px;height:1px;background:#fdfdfd"></div>
<div class="" style="left:426px;top:450px;width:540px;height:2px;background:#a3a3a3;z-index:4"></div>
<div class="" style="left:425px;top:452px;width:541px;height:4px;background:#fbfbfb"></div>
<div class="" style="left:426px;top:456px;width:540px;height:1px;background:#b4b4b4;z-index:4"></div>
<div class="page" style="left:427px;top:480px;width:537px;height:137px;"></div>
<div class="tab" style="left:429px;top:462px;width:73px;height:18px;"></div>
<span class="t" style="left:435.3px;top:463.90px;font-size:13px;line-height:15px;transform:scaleX(0.86);z-index:3;">Управление</span>
<div class="tab" style="left:504px;top:462px;width:40px;height:18px;"></div>
<span class="t" style="left:509.8px;top:463.90px;font-size:13px;line-height:15px;transform:scaleX(0.827);z-index:3;">MD5</span>
<div class="tab" style="left:546px;top:462px;width:40px;height:18px;"></div>
<span class="t" style="left:552.1px;top:463.90px;font-size:13px;line-height:15px;transform:scaleX(0.842);z-index:3;">Ряды</span>
<div class="tab" style="left:588px;top:462px;width:107px;height:18px;"></div>
<span class="t" style="left:593px;top:463.90px;font-size:13px;line-height:15px;transform:scaleX(0.845);z-index:3;">Позиционирование</span>
<div class="tab" style="left:791px;top:462px;width:88px;height:18px;"></div>
<span class="t" style="left:795.2px;top:463.90px;font-size:13px;line-height:15px;transform:scaleX(0.846);z-index:3;">График частот2</span>
<div class="tab a" style="left:695px;top:460px;width:96px;height:21px;"></div>
<span class="t" style="left:703.6px;top:461.80px;font-size:13px;line-height:15px;transform:scaleX(0.829);z-index:3;">График частот1</span>
<div class="" style="left:432px;top:485px;width:530px;height:129px;background:#f0f0f0;border-bottom:1px solid #b0b0b0;border-right:1px solid #b0b0b0;"></div>
<svg style="left:431px;top:482px" width="531" height="130" viewBox="431 482 531 130" font-family="Liberation Sans, sans-serif"><path d="M453.5 487V597M467.5 487V597M481.5 487V597M494.5 487V597M508.5 487V597M522.5 487V597M535.5 487V597M549.5 487V597M563.5 487V597M576.5 487V597M590.5 487V597M604.5 487V597M617.5 487V597M631.5 487V597M645.5 487V597M658.5 487V597M672.5 487V597M686.5 487V597M700.5 487V597M713.5 487V597M727.5 487V597M741.5 487V597M754.5 487V597M768.5 487V597M782.5 487V597M795.5 487V597M809.5 487V597M823.5 487V597M836.5 487V597M850.5 487V597M864.5 487V597M878.5 487V597M891.5 487V597M905.5 487V597M919.5 487V597M932.5 487V597M946.5 487V597" stroke="#868686" stroke-width="1" stroke-dasharray="1 1" fill="none"/><path d="M443 595.5H957M443 564.5H957M443 534.5H957M443 503.5H957" stroke="#6e6e6e" stroke-width="1" stroke-dasharray="4 2.500" fill="none"/><path d="M453.5 597v4M467.5 597v4M481.5 597v4M494.5 597v4M508.5 597v4M522.5 597v4M535.5 597v4M549.5 597v4M563.5 597v4M576.5 597v4M590.5 597v4M604.5 597v4M617.5 597v4M631.5 597v4M645.5 597v4M658.5 597v4M672.5 597v4M686.5 597v4M700.5 597v4M713.5 597v4M727.5 597v4M741.5 597v4M754.5 597v4M768.5 597v4M782.5 597v4M795.5 597v4M809.5 597v4M823.5 597v4M836.5 597v4M850.5 597v4M864.5 597v4M878.5 597v4M891.5 597v4M905.5 597v4M919.5 597v4M932.5 597v4M946.5 597v4M440 595.5H443M441 580.5H443M440 564.5H443M441 549.5H443M440 534.5H443M441 518.5H443M440 503.5H443M441 488.5H443" stroke="#808080" stroke-width="1" fill="none"/><rect x="443.5" y="486.500" width="513" height="110" fill="none" stroke="#000" stroke-width="1"/><path d="M443 597.500H957" fill="none" stroke="#000" stroke-width="1"/><polyline points="453.1,580.1 466.8,595.5 480.5,564.8 494.2,534.1 507.9,534.1 521.6,534.1 535.3,564.8 549.0,534.1 562.7,534.1 576.4,549.5 590.0,534.1 603.7,518.8 617.4,549.5 631.1,580.1 644.8,564.8 658.5,488.1 672.2,595.5 685.9,549.5 699.6,580.1 713.3,580.1 727.0,580.1 740.6,549.5 754.3,564.8 768.0,549.5 781.7,564.8 795.4,534.1 809.1,564.8 822.8,564.8 836.5,564.8 850.2,549.5 863.8,518.8 877.5,564.8 891.2,580.1 904.9,595.5 918.6,549.5 932.3,549.5 946.0,580.1" fill="none" stroke="#7f1fe8" stroke-width="1.100"/><svg x="432" y="485" width="530" height="127" viewBox="432 485 530 127"><rect x="447.5" y="567.5" width="12" height="11" fill="#00ccee" stroke="#000" stroke-width="1"/><text x="453.5" y="575.8" font-size="8.500" text-anchor="middle" fill="#000">1</text><path d="M450.8 579.2h4.800l-2.400 3.600z" fill="#fff" stroke="#000" stroke-width=".900"/><rect x="461.5" y="582.5" width="12" height="11" fill="#00ccee" stroke="#000" stroke-width="1"/><text x="467.5" y="590.8" font-size="8.500" text-anchor="middle" fill="#000">0</text><path d="M464.4 594.2h4.800l-2.400 3.600z" fill="#fff" stroke="#000" stroke-width=".900"/><rect x="475.5" y="551.5" width="12" height="11" fill="#00ccee" stroke="#000" stroke-width="1"/><text x="481.5" y="559.8" font-size="8.500" text-anchor="middle" fill="#000">2</text><path d="M478.1 563.2h4.800l-2.400 3.600z" fill="#fff" stroke="#000" stroke-width=".900"/><rect x="488.5" y="521.5" width="12" height="11" fill="#00ccee" stroke="#000" stroke-width="1"/><text x="494.5" y="529.8" font-size="8.500" text-anchor="middle" fill="#000">4</text><path d="M491.8 533.2h4.800l-2.400 3.600z" fill="#fff" stroke="#000" stroke-width=".900"/><rect x="502.5" y="521.5" width="12" height="11" fill="#00ccee" stroke="#000" stroke-width="1"/><text x="508.5" y="529.8" font-size="8.500" text-anchor="middle" fill="#000">4</text><path d="M505.5 533.2h4.800l-2.400 3.600z" fill="#fff" stroke="#000" stroke-width=".900"/><rect x="516.5" y="521.5" width="12" height="11" fill="#00ccee" stroke="#000" stroke-width="1"/><text x="522.5" y="529.8" font-size="8.500" text-anchor="middle" fill="#000">4</text><path d="M519.2 533.2h4.800l-2.400 3.600z" fill="#fff" stroke="#000" stroke-width=".900"/><rect x="529.5" y="551.5" width="12" height="11" fill="#00ccee" stroke="#000" stroke-width="1"/><text x="535.5" y="559.8" font-size="8.500" text-anchor="middle" fill="#000">2</text><path d="M532.9 563.2h4.800l-2.400 3.600z" fill="#fff" stroke="#000" stroke-width=".900"/><rect x="543.5" y="521.5" width="12" height="11" fill="#00ccee" stroke="#000" stroke-width="1"/><text x="549.5" y="529.8" font-size="8.500" text-anchor="middle" fill="#000">4</text><path d="M546.6 533.2h4.800l-2.400 3.600z" fill="#fff" stroke="#000" stroke-width=".900"/><rect x="557.5" y="521.5" width="12" height="11" fill="#00ccee" stroke="#000" stroke-width="1"/><text x="563.5" y="529.8" font-size="8.500" text-anchor="middle" fill="#000">4</text><path d="M560.3 533.2h4.800l-2.400 3.600z" fill="#fff" stroke="#000" stroke-width=".900"/><rect x="570.5" y="536.5" width="12" height="11" fill="#00ccee" stroke="#000" stroke-width="1"/><text x="576.5" y="544.8" font-size="8.500" text-anchor="middle" fill="#000">3</text><path d="M574.0 548.2h4.800l-2.400 3.600z" fill="#fff" stroke="#000" stroke-width=".900"/><rect x="584.5" y="521.5" width="12" height="11" fill="#00ccee" stroke="#000" stroke-width="1"/><text x="590.5" y="529.8" font-size="8.500" text-anchor="middle" fill="#000">4</text><path d="M587.6 533.2h4.800l-2.400 3.600z" fill="#fff" stroke="#000" stroke-width=".900"/><rect x="598.5" y="505.5" width="12" height="11" fill="#00ccee" stroke="#000" stroke-width="1"/><text x="604.5" y="513.8" font-size="8.500" text-anchor="middle" fill="#000">5</text><path d="M601.3 517.2h4.800l-2.400 3.600z" fill="#fff" stroke="#000" stroke-width=".900"/><rect x="611.5" y="536.5" width="12" height="11" fill="#00ccee" stroke="#000" stroke-width="1"/><text x="617.5" y="544.8" font-size="8.500" text-anchor="middle" fill="#000">3</text><path d="M615.0 548.2h4.800l-2.400 3.600z" fill="#fff" stroke="#000" stroke-width=".900"/><rect x="625.5" y="567.5" width="12" height="11" fill="#00ccee" stroke="#000" stroke-width="1"/><text x="631.5" y="575.8" font-size="8.500" text-anchor="middle" fill="#000">1</text><path d="M628.7 579.2h4.800l-2.400 3.600z" fill="#fff" stroke="#000" stroke-width=".900"/><rect x="639.5" y="551.5" width="12" height="11" fill="#00ccee" stroke="#000" stroke-width="1"/><text x="645.5" y="559.8" font-size="8.500" text-anchor="middle" fill="#000">2</text><path d="M642.4 563.2h4.800l-2.400 3.600z" fill="#fff" stroke="#000" stroke-width=".900"/><rect x="652.5" y="475.5" width="12" height="11" fill="#00ccee" stroke="#000" stroke-width="1"/><text x="658.5" y="483.8" font-size="8.500" text-anchor="middle" fill="#000">7</text><path d="M656.1 487.2h4.800l-2.400 3.600z" fill="#fff" stroke="#000" stroke-width=".900"/><rect x="666.5" y="582.5" width="12" height="11" fill="#00ccee" stroke="#000" stroke-width="1"/><text x="672.5" y="590.8" font-size="8.500" text-anchor="middle" fill="#000">0</text><path d="M669.8 594.2h4.800l-2.400 3.600z" fill="#fff" stroke="#000" stroke-width=".900"/><rect x="680.5" y="536.5" width="12" height="11" fill="#00ccee" stroke="#000" stroke-width="1"/><text x="686.5" y="544.8" font-size="8.500" text-anchor="middle" fill="#000">3</text><path d="M683.5 548.2h4.800l-2.400 3.600z" fill="#fff" stroke="#000" stroke-width=".900"/><rect x="694.5" y="567.5" width="12" height="11" fill="#00ccee" stroke="#000" stroke-width="1"/><text x="700.5" y="575.8" font-size="8.500" text-anchor="middle" fill="#000">1</text><path d="M697.2 579.2h4.800l-2.400 3.600z" fill="#fff" stroke="#000" stroke-width=".900"/><rect x="707.5" y="567.5" width="12" height="11" fill="#00ccee" stroke="#000" stroke-width="1"/><text x="713.5" y="575.8" font-size="8.500" text-anchor="middle" fill="#000">1</text><path d="M710.9 579.2h4.800l-2.400 3.600z" fill="#fff" stroke="#000" stroke-width=".900"/><rect x="721.5" y="567.5" width="12" height="11" fill="#00ccee" stroke="#000" stroke-width="1"/><text x="727.5" y="575.8" font-size="8.500" text-anchor="middle" fill="#000">1</text><path d="M724.6 579.2h4.800l-2.400 3.600z" fill="#fff" stroke="#000" stroke-width=".900"/><rect x="735.5" y="536.5" width="12" height="11" fill="#00ccee" stroke="#000" stroke-width="1"/><text x="741.5" y="544.8" font-size="8.500" text-anchor="middle" fill="#000">3</text><path d="M738.2 548.2h4.800l-2.400 3.600z" fill="#fff" stroke="#000" stroke-width=".900"/><rect x="748.5" y="551.5" width="12" height="11" fill="#00ccee" stroke="#000" stroke-width="1"/><text x="754.5" y="559.8" font-size="8.500" text-anchor="middle" fill="#000">2</text><path d="M751.9 563.2h4.800l-2.400 3.600z" fill="#fff" stroke="#000" stroke-width=".900"/><rect x="762.5" y="536.5" width="12" height="11" fill="#00ccee" stroke="#000" stroke-width="1"/><text x="768.5" y="544.8" font-size="8.500" text-anchor="middle" fill="#000">3</text><path d="M765.6 548.2h4.800l-2.400 3.600z" fill="#fff" stroke="#000" stroke-width=".900"/><rect x="776.5" y="551.5" width="12" height="11" fill="#00ccee" stroke="#000" stroke-width="1"/><text x="782.5" y="559.8" font-size="8.500" text-anchor="middle" fill="#000">2</text><path d="M779.3 563.2h4.800l-2.400 3.600z" fill="#fff" stroke="#000" stroke-width=".900"/><rect x="789.5" y="521.5" width="12" height="11" fill="#00ccee" stroke="#000" stroke-width="1"/><text x="795.5" y="529.8" font-size="8.500" text-anchor="middle" fill="#000">4</text><path d="M793.0 533.2h4.800l-2.400 3.600z" fill="#fff" stroke="#000" stroke-width=".900"/><rect x="803.5" y="551.5" width="12" height="11" fill="#00ccee" stroke="#000" stroke-width="1"/><text x="809.5" y="559.8" font-size="8.500" text-anchor="middle" fill="#000">2</text><path d="M806.7 563.2h4.800l-2.400 3.600z" fill="#fff" stroke="#000" stroke-width=".900"/><rect x="817.5" y="551.5" width="12" height="11" fill="#00ccee" stroke="#000" stroke-width="1"/><text x="823.5" y="559.8" font-size="8.500" text-anchor="middle" fill="#000">2</text><path d="M820.4 563.2h4.800l-2.400 3.600z" fill="#fff" stroke="#000" stroke-width=".900"/><rect x="830.5" y="551.5" width="12" height="11" fill="#00ccee" stroke="#000" stroke-width="1"/><text x="836.5" y="559.8" font-size="8.500" text-anchor="middle" fill="#000">2</text><path d="M834.1 563.2h4.800l-2.400 3.600z" fill="#fff" stroke="#000" stroke-width=".900"/><rect x="844.5" y="536.5" width="12" height="11" fill="#00ccee" stroke="#000" stroke-width="1"/><text x="850.5" y="544.8" font-size="8.500" text-anchor="middle" fill="#000">3</text><path d="M847.8 548.2h4.800l-2.400 3.600z" fill="#fff" stroke="#000" stroke-width=".900"/><rect x="858.5" y="505.5" width="12" height="11" fill="#00ccee" stroke="#000" stroke-width="1"/><text x="864.5" y="513.8" font-size="8.500" text-anchor="middle" fill="#000">5</text><path d="M861.4 517.2h4.800l-2.400 3.600z" fill="#fff" stroke="#000" stroke-width=".900"/><rect x="872.5" y="551.5" width="12" height="11" fill="#00ccee" stroke="#000" stroke-width="1"/><text x="878.5" y="559.8" font-size="8.500" text-anchor="middle" fill="#000">2</text><path d="M875.1 563.2h4.800l-2.400 3.600z" fill="#fff" stroke="#000" stroke-width=".900"/><rect x="885.5" y="567.5" width="12" height="11" fill="#00ccee" stroke="#000" stroke-width="1"/><text x="891.5" y="575.8" font-size="8.500" text-anchor="middle" fill="#000">1</text><path d="M888.8 579.2h4.800l-2.400 3.600z" fill="#fff" stroke="#000" stroke-width=".900"/><rect x="899.5" y="582.5" width="12" height="11" fill="#00ccee" stroke="#000" stroke-width="1"/><text x="905.5" y="590.8" font-size="8.500" text-anchor="middle" fill="#000">0</text><path d="M902.5 594.2h4.800l-2.400 3.600z" fill="#fff" stroke="#000" stroke-width=".900"/><rect x="913.5" y="536.5" width="12" height="11" fill="#00ccee" stroke="#000" stroke-width="1"/><text x="919.5" y="544.8" font-size="8.500" text-anchor="middle" fill="#000">3</text><path d="M916.2 548.2h4.800l-2.400 3.600z" fill="#fff" stroke="#000" stroke-width=".900"/><rect x="926.5" y="536.5" width="12" height="11" fill="#00ccee" stroke="#000" stroke-width="1"/><text x="932.5" y="544.8" font-size="8.500" text-anchor="middle" fill="#000">3</text><path d="M929.9 548.2h4.800l-2.400 3.600z" fill="#fff" stroke="#000" stroke-width=".900"/><rect x="940.5" y="567.5" width="12" height="11" fill="#00ccee" stroke="#000" stroke-width="1"/><text x="946.5" y="575.8" font-size="8.500" text-anchor="middle" fill="#000">1</text><path d="M943.6 579.2h4.800l-2.400 3.600z" fill="#fff" stroke="#000" stroke-width=".900"/></svg><text x="453.1" y="610" font-size="10" text-anchor="middle" fill="#000" textLength="5.2" lengthAdjust="spacingAndGlyphs">0</text><text x="466.8" y="610" font-size="10" text-anchor="middle" fill="#000" textLength="5.2" lengthAdjust="spacingAndGlyphs">1</text><text x="480.5" y="610" font-size="10" text-anchor="middle" fill="#000" textLength="5.2" lengthAdjust="spacingAndGlyphs">2</text><text x="494.2" y="610" font-size="10" text-anchor="middle" fill="#000" textLength="5.2" lengthAdjust="spacingAndGlyphs">3</text><text x="507.9" y="610" font-size="10" text-anchor="middle" fill="#000" textLength="5.2" lengthAdjust="spacingAndGlyphs">4</text><text x="521.6" y="610" font-size="10" text-anchor="middle" fill="#000" textLength="5.2" lengthAdjust="spacingAndGlyphs">5</text><text x="535.3" y="610" font-size="10" text-anchor="middle" fill="#000" textLength="5.2" lengthAdjust="spacingAndGlyphs">6</text><text x="549.0" y="610" font-size="10" text-anchor="middle" fill="#000" textLength="5.2" lengthAdjust="spacingAndGlyphs">7</text><text x="562.7" y="610" font-size="10" text-anchor="middle" fill="#000" textLength="5.2" lengthAdjust="spacingAndGlyphs">8</text><text x="576.4" y="610" font-size="10" text-anchor="middle" fill="#000" textLength="5.2" lengthAdjust="spacingAndGlyphs">9</text><text x="590.0" y="610" font-size="10" text-anchor="middle" fill="#000" textLength="10.4" lengthAdjust="spacingAndGlyphs">10</text><text x="603.7" y="610" font-size="10" text-anchor="middle" fill="#000" textLength="10.4" lengthAdjust="spacingAndGlyphs">11</text><text x="617.4" y="610" font-size="10" text-anchor="middle" fill="#000" textLength="10.4" lengthAdjust="spacingAndGlyphs">12</text><text x="631.1" y="610" font-size="10" text-anchor="middle" fill="#000" textLength="10.4" lengthAdjust="spacingAndGlyphs">13</text><text x="644.8" y="610" font-size="10" text-anchor="middle" fill="#000" textLength="10.4" lengthAdjust="spacingAndGlyphs">14</text><text x="658.5" y="610" font-size="10" text-anchor="middle" fill="#000" textLength="10.4" lengthAdjust="spacingAndGlyphs">15</text><text x="672.2" y="610" font-size="10" text-anchor="middle" fill="#000" textLength="10.4" lengthAdjust="spacingAndGlyphs">16</text><text x="685.9" y="610" font-size="10" text-anchor="middle" fill="#000" textLength="10.4" lengthAdjust="spacingAndGlyphs">17</text><text x="699.6" y="610" font-size="10" text-anchor="middle" fill="#000" textLength="10.4" lengthAdjust="spacingAndGlyphs">18</text><text x="713.3" y="610" font-size="10" text-anchor="middle" fill="#000" textLength="10.4" lengthAdjust="spacingAndGlyphs">19</text><text x="727.0" y="610" font-size="10" text-anchor="middle" fill="#000" textLength="10.4" lengthAdjust="spacingAndGlyphs">20</text><text x="740.6" y="610" font-size="10" text-anchor="middle" fill="#000" textLength="10.4" lengthAdjust="spacingAndGlyphs">21</text><text x="754.3" y="610" font-size="10" text-anchor="middle" fill="#000" textLength="10.4" lengthAdjust="spacingAndGlyphs">22</text><text x="768.0" y="610" font-size="10" text-anchor="middle" fill="#000" textLength="10.4" lengthAdjust="spacingAndGlyphs">23</text><text x="781.7" y="610" font-size="10" text-anchor="middle" fill="#000" textLength="10.4" lengthAdjust="spacingAndGlyphs">24</text><text x="795.4" y="610" font-size="10" text-anchor="middle" fill="#000" textLength="10.4" lengthAdjust="spacingAndGlyphs">25</text><text x="809.1" y="610" font-size="10" text-anchor="middle" fill="#000" textLength="10.4" lengthAdjust="spacingAndGlyphs">26</text><text x="822.8" y="610" font-size="10" text-anchor="middle" fill="#000" textLength="10.4" lengthAdjust="spacingAndGlyphs">27</text><text x="836.5" y="610" font-size="10" text-anchor="middle" fill="#000" textLength="10.4" lengthAdjust="spacingAndGlyphs">28</text><text x="850.2" y="610" font-size="10" text-anchor="middle" fill="#000" textLength="10.4" lengthAdjust="spacingAndGlyphs">29</text><text x="863.8" y="610" font-size="10" text-anchor="middle" fill="#000" textLength="10.4" lengthAdjust="spacingAndGlyphs">30</text><text x="877.5" y="610" font-size="10" text-anchor="middle" fill="#000" textLength="10.4" lengthAdjust="spacingAndGlyphs">31</text><text x="891.2" y="610" font-size="10" text-anchor="middle" fill="#000" textLength="10.4" lengthAdjust="spacingAndGlyphs">32</text><text x="904.9" y="610" font-size="10" text-anchor="middle" fill="#000" textLength="10.4" lengthAdjust="spacingAndGlyphs">33</text><text x="918.6" y="610" font-size="10" text-anchor="middle" fill="#000" textLength="10.4" lengthAdjust="spacingAndGlyphs">34</text><text x="932.3" y="610" font-size="10" text-anchor="middle" fill="#000" textLength="10.4" lengthAdjust="spacingAndGlyphs">35</text><text x="946.0" y="610" font-size="10" text-anchor="middle" fill="#000" textLength="10.4" lengthAdjust="spacingAndGlyphs">36</text><text x="438" y="599.0" font-size="10" text-anchor="middle" fill="#000">0</text><text x="438" y="568.3" font-size="10" text-anchor="middle" fill="#000">2</text><text x="438" y="537.6" font-size="10" text-anchor="middle" fill="#000">4</text><text x="438" y="506.9" font-size="10" text-anchor="middle" fill="#000">6</text></svg>
<div class="" style="left:964px;top:30px;width:2px;height:590px;background:#fbfbfb"></div>
<div class="" style="left:966px;top:30px;width:2px;height:590px;background:#a3a3a3"></div>
<div class="" style="left:425px;top:618px;width:541px;height:2px;background:#a3a3a3"></div>
</div></body></html>
